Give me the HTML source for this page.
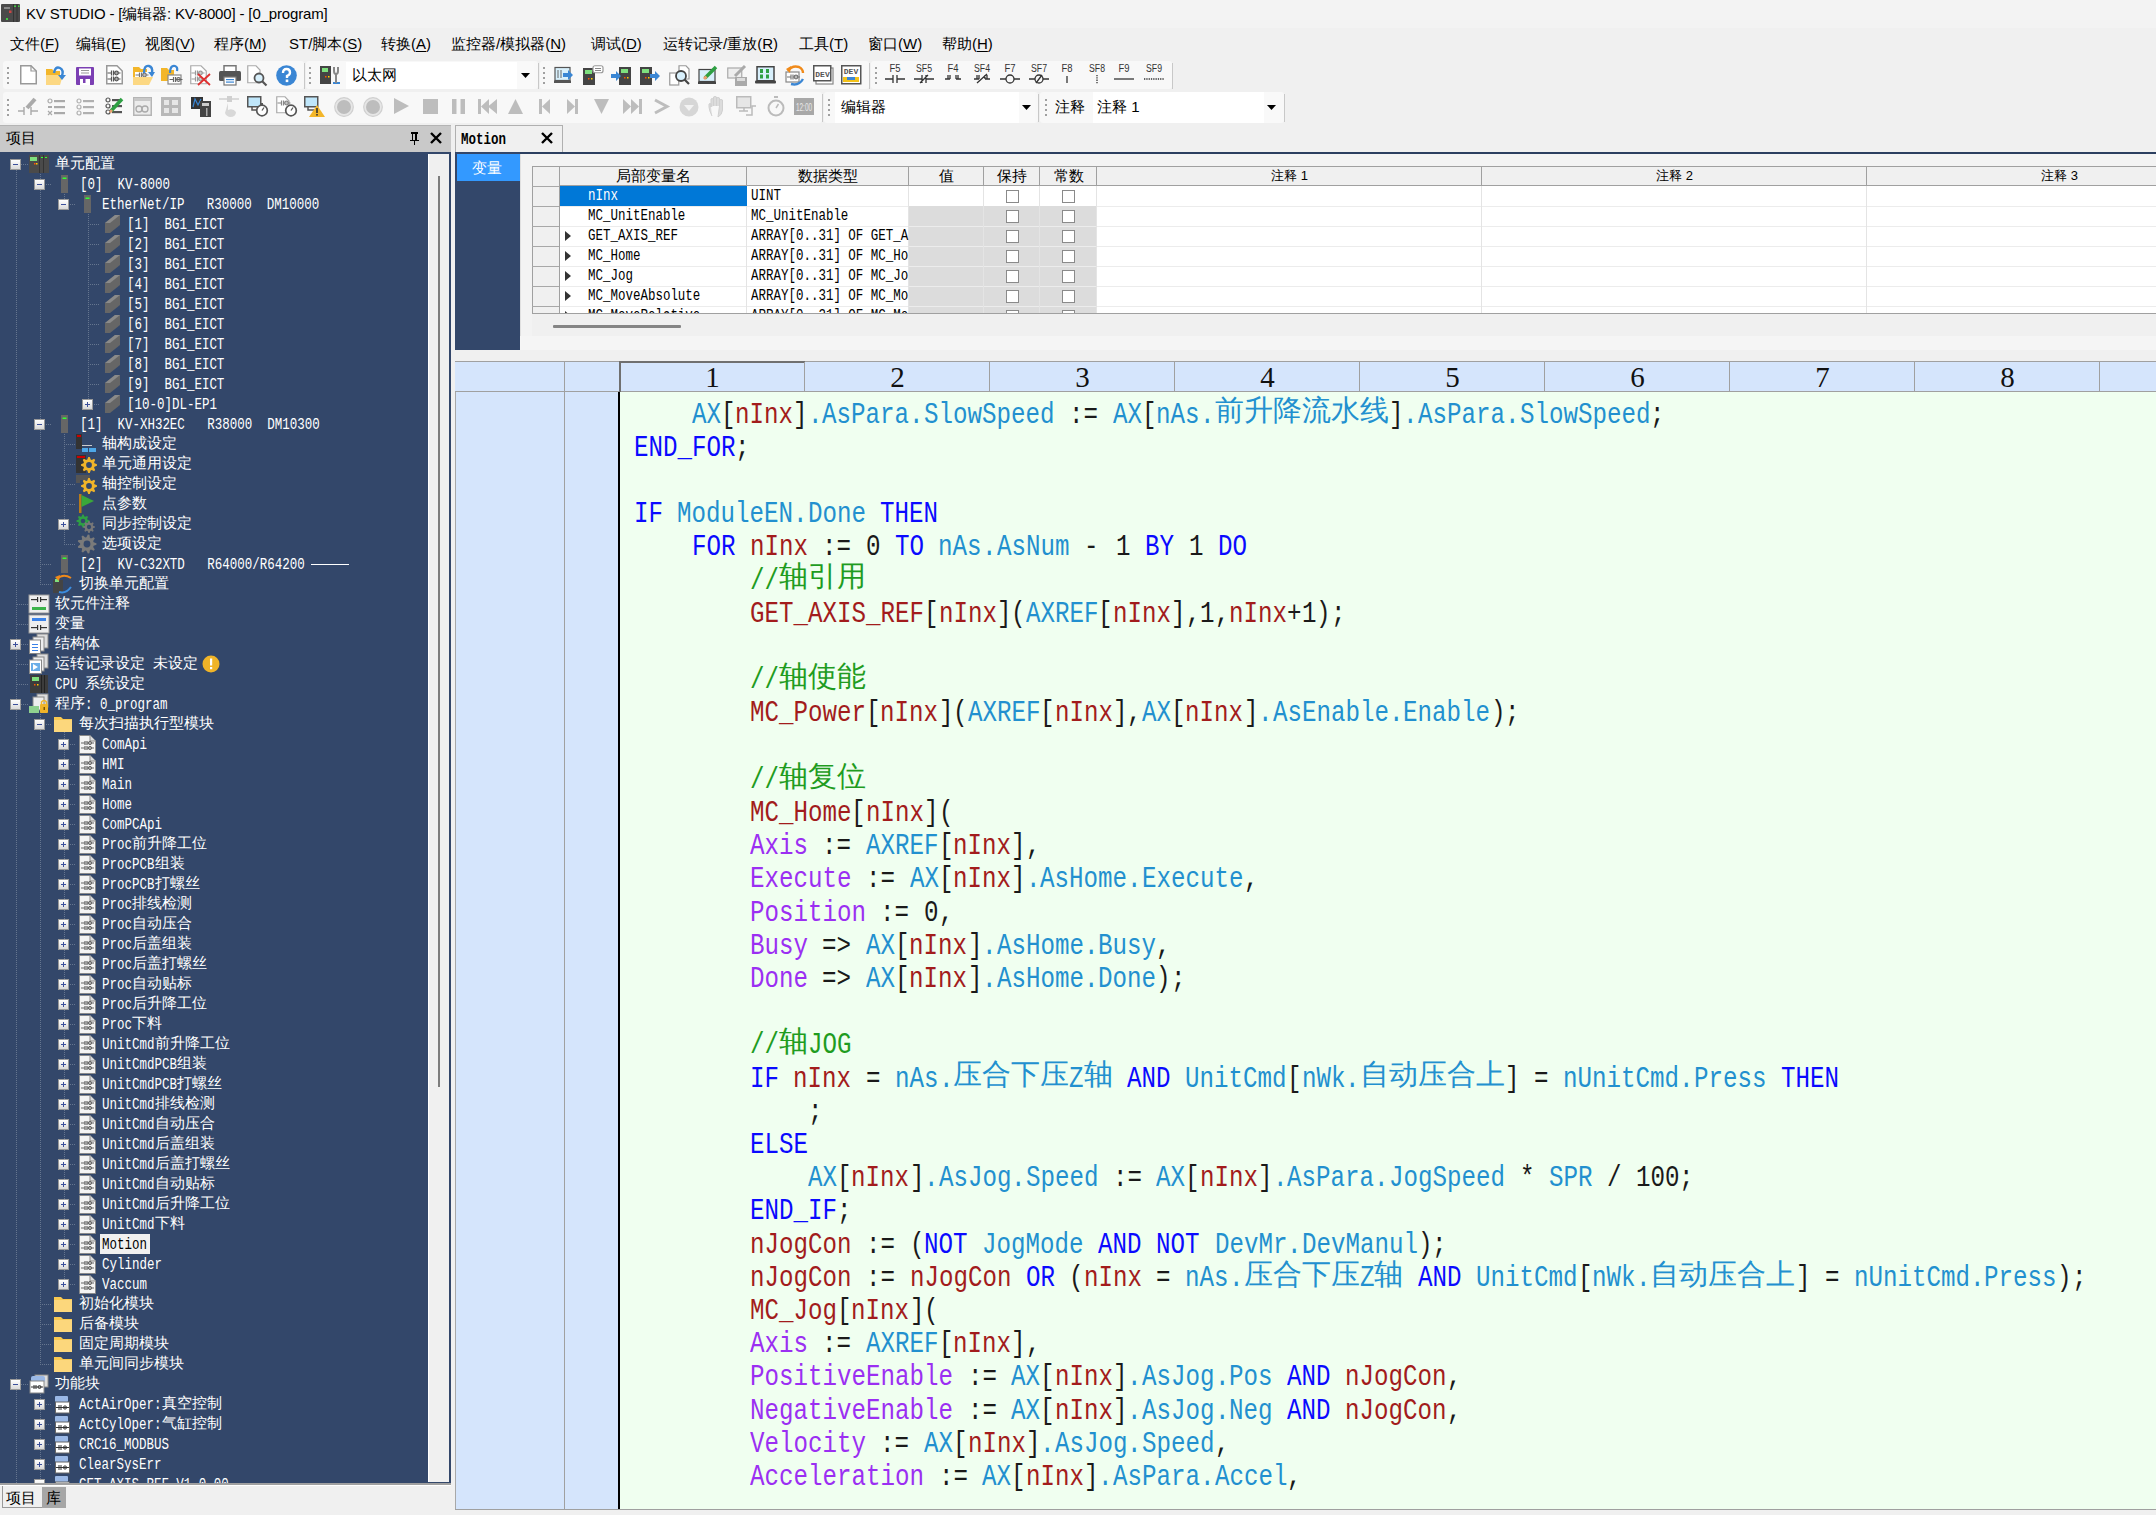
<!DOCTYPE html><html><head><meta charset="utf-8"><style>
*{margin:0;padding:0;box-sizing:border-box}
html,body{width:2156px;height:1515px;overflow:hidden;background:#f0f0f0;font-family:"Liberation Sans",sans-serif}
.ml{position:absolute;white-space:pre;font-family:"Liberation Mono",monospace}
.ml i{display:inline-block;font-style:normal;white-space:pre;vertical-align:baseline}
.ml i b{display:inline-block;font-weight:normal;transform-origin:0 50%}
.ml.bold{font-weight:bold}.ml.bold i b{font-weight:bold}
.ml i.cj{font-family:"Liberation Sans",sans-serif;line-height:0;position:relative;top:-0.07em}
.ui{position:absolute;white-space:pre;font-size:15px;color:#000;line-height:20px}
svg{position:absolute;overflow:visible}
</style></head><body><div style="position:absolute;left:0px;top:0px;width:2156px;height:28px;background:#f3f3f3"></div>
<svg style="left:1px;top:4px" width="19" height="18" viewBox="0 0 19 18"><rect width="19" height="18" rx="1" fill="#4a4a4a"/><rect x="12" y="0" width="1" height="18" fill="#333"/><rect x="15.5" y="0" width="1" height="18" fill="#333"/><rect x="13" y="1.5" width="2" height="1.5" fill="#4c4"/><rect x="17" y="1.5" width="1.5" height="1.5" fill="#4c4"/><rect x="3" y="3" width="6" height="2" fill="#888"/><rect x="8" y="6.5" width="2.5" height="2.5" fill="#c44"/><rect x="5" y="14" width="2" height="2" fill="#4c4"/></svg>
<div style="position:absolute;left:26px;top:4px;white-space:pre;font-size:15px;line-height:20px;color:#000;letter-spacing:-0.15px">KV STUDIO - [编辑器: KV-8000] - [0_program]</div>
<div class="ui" style="left:10px;top:34px">文件(<u style="text-decoration-thickness:1px;text-underline-offset:2px">F</u>)</div>
<div class="ui" style="left:76px;top:34px">编辑(<u style="text-decoration-thickness:1px;text-underline-offset:2px">E</u>)</div>
<div class="ui" style="left:145px;top:34px">视图(<u style="text-decoration-thickness:1px;text-underline-offset:2px">V</u>)</div>
<div class="ui" style="left:214px;top:34px">程序(<u style="text-decoration-thickness:1px;text-underline-offset:2px">M</u>)</div>
<div class="ui" style="left:289px;top:34px">ST/脚本(<u style="text-decoration-thickness:1px;text-underline-offset:2px">S</u>)</div>
<div class="ui" style="left:381px;top:34px">转换(<u style="text-decoration-thickness:1px;text-underline-offset:2px">A</u>)</div>
<div class="ui" style="left:451px;top:34px">监控器/模拟器(<u style="text-decoration-thickness:1px;text-underline-offset:2px">N</u>)</div>
<div class="ui" style="left:591px;top:34px">调试(<u style="text-decoration-thickness:1px;text-underline-offset:2px">D</u>)</div>
<div class="ui" style="left:663px;top:34px">运转记录/重放(<u style="text-decoration-thickness:1px;text-underline-offset:2px">R</u>)</div>
<div class="ui" style="left:799px;top:34px">工具(<u style="text-decoration-thickness:1px;text-underline-offset:2px">T</u>)</div>
<div class="ui" style="left:868px;top:34px">窗口(<u style="text-decoration-thickness:1px;text-underline-offset:2px">W</u>)</div>
<div class="ui" style="left:942px;top:34px">帮助(<u style="text-decoration-thickness:1px;text-underline-offset:2px">H</u>)</div>
<div style="position:absolute;left:3px;top:61px;width:301px;height:28px;background:#f8f8f8;border-radius:3px"></div>
<div style="position:absolute;left:7px;top:67px;width:2px;height:2px;background:#a0a0a0"></div>
<div style="position:absolute;left:7px;top:72px;width:2px;height:2px;background:#a0a0a0"></div>
<div style="position:absolute;left:7px;top:77px;width:2px;height:2px;background:#a0a0a0"></div>
<div style="position:absolute;left:7px;top:82px;width:2px;height:2px;background:#a0a0a0"></div>
<div style="position:absolute;left:306px;top:61px;width:232px;height:28px;background:#f8f8f8;border-radius:3px"></div>
<div style="position:absolute;left:309px;top:67px;width:2px;height:2px;background:#a0a0a0"></div>
<div style="position:absolute;left:309px;top:72px;width:2px;height:2px;background:#a0a0a0"></div>
<div style="position:absolute;left:309px;top:77px;width:2px;height:2px;background:#a0a0a0"></div>
<div style="position:absolute;left:309px;top:82px;width:2px;height:2px;background:#a0a0a0"></div>
<div style="position:absolute;left:540px;top:61px;width:329px;height:28px;background:#f8f8f8;border-radius:3px"></div>
<div style="position:absolute;left:543px;top:67px;width:2px;height:2px;background:#a0a0a0"></div>
<div style="position:absolute;left:543px;top:72px;width:2px;height:2px;background:#a0a0a0"></div>
<div style="position:absolute;left:543px;top:77px;width:2px;height:2px;background:#a0a0a0"></div>
<div style="position:absolute;left:543px;top:82px;width:2px;height:2px;background:#a0a0a0"></div>
<div style="position:absolute;left:871px;top:61px;width:301px;height:28px;background:#f8f8f8;border-radius:3px"></div>
<div style="position:absolute;left:875px;top:67px;width:2px;height:2px;background:#a0a0a0"></div>
<div style="position:absolute;left:875px;top:72px;width:2px;height:2px;background:#a0a0a0"></div>
<div style="position:absolute;left:875px;top:77px;width:2px;height:2px;background:#a0a0a0"></div>
<div style="position:absolute;left:875px;top:82px;width:2px;height:2px;background:#a0a0a0"></div>
<div style="position:absolute;left:304px;top:63px;width:1px;height:26px;background:#c8c8c8"></div>
<div style="position:absolute;left:538px;top:63px;width:1px;height:26px;background:#c8c8c8"></div>
<div style="position:absolute;left:869px;top:63px;width:1px;height:26px;background:#c8c8c8"></div>
<div style="position:absolute;left:1172px;top:63px;width:1px;height:26px;background:#c8c8c8"></div>
<div style="position:absolute;left:3px;top:92px;width:819px;height:31px;background:#f8f8f8;border-radius:3px"></div>
<div style="position:absolute;left:7px;top:99px;width:2px;height:2px;background:#a0a0a0"></div>
<div style="position:absolute;left:7px;top:104px;width:2px;height:2px;background:#a0a0a0"></div>
<div style="position:absolute;left:7px;top:109px;width:2px;height:2px;background:#a0a0a0"></div>
<div style="position:absolute;left:7px;top:114px;width:2px;height:2px;background:#a0a0a0"></div>
<div style="position:absolute;left:824px;top:92px;width:214px;height:31px;background:#f8f8f8;border-radius:3px"></div>
<div style="position:absolute;left:828px;top:99px;width:2px;height:2px;background:#a0a0a0"></div>
<div style="position:absolute;left:828px;top:104px;width:2px;height:2px;background:#a0a0a0"></div>
<div style="position:absolute;left:828px;top:109px;width:2px;height:2px;background:#a0a0a0"></div>
<div style="position:absolute;left:828px;top:114px;width:2px;height:2px;background:#a0a0a0"></div>
<div style="position:absolute;left:1040px;top:92px;width:244px;height:31px;background:#f8f8f8;border-radius:3px"></div>
<div style="position:absolute;left:1045px;top:99px;width:2px;height:2px;background:#a0a0a0"></div>
<div style="position:absolute;left:1045px;top:104px;width:2px;height:2px;background:#a0a0a0"></div>
<div style="position:absolute;left:1045px;top:109px;width:2px;height:2px;background:#a0a0a0"></div>
<div style="position:absolute;left:1045px;top:114px;width:2px;height:2px;background:#a0a0a0"></div>
<div style="position:absolute;left:822px;top:94px;width:1px;height:28px;background:#c8c8c8"></div>
<div style="position:absolute;left:1038px;top:94px;width:1px;height:28px;background:#c8c8c8"></div>
<div style="position:absolute;left:1284px;top:94px;width:1px;height:28px;background:#c8c8c8"></div>
<div style="position:absolute;left:346px;top:62px;width:188px;height:27px;background:#fff"></div>
<div style="position:absolute;left:517px;top:62px;width:17px;height:27px;background:#f9f9f9"></div>
<div style="position:absolute;left:352px;top:65px;white-space:pre;font-size:15px;line-height:20px">以太网</div>
<svg style="left:521px;top:73px" width="9" height="5"><path d="M0 0H9L4.5 5Z" fill="#000"/></svg>
<div style="position:absolute;left:835px;top:92px;width:200px;height:31px;background:#fff"></div>
<div style="position:absolute;left:1019px;top:92px;width:16px;height:31px;background:#f9f9f9"></div>
<div style="position:absolute;left:841px;top:97px;white-space:pre;font-size:15px;line-height:20px">编辑器</div>
<svg style="left:1022px;top:105px" width="9" height="5"><path d="M0 0H9L4.5 5Z" fill="#000"/></svg>
<div style="position:absolute;left:1055px;top:97px;white-space:pre;font-size:15px;line-height:20px">注释</div>
<div style="position:absolute;left:1093px;top:92px;width:187px;height:31px;background:#fff"></div>
<div style="position:absolute;left:1264px;top:92px;width:16px;height:31px;background:#f9f9f9"></div>
<div style="position:absolute;left:1097px;top:97px;white-space:pre;font-size:15px;line-height:20px">注释 1</div>
<svg style="left:1267px;top:105px" width="9" height="5"><path d="M0 0H9L4.5 5Z" fill="#000"/></svg>
<svg style="left:20px;top:65px" width="17" height="20" viewBox="0 0 17 20"><path d="M0.75 0.75H11L16.25 6V18.75H0.75Z" fill="#fff" stroke="#999" stroke-width="1.5"/><path d="M11 0.75V6H16.25" fill="none" stroke="#999" stroke-width="1.2"/></svg>
<svg style="left:46px;top:67px" width="21" height="19" viewBox="0 0 21 19"><path d="M0 2H6L8 4H14V18H0Z" fill="#f3b62a"/><path d="M0 8H17L14 18H0Z" fill="#fcd883"/><path d="M8 6Q9 -1 14 1Q18 3 16 9" stroke="#3a86d4" stroke-width="2.4" fill="none"/><path d="M12 8L16 13L20 8Z" fill="#3a86d4"/></svg>
<svg style="left:76px;top:67px" width="18" height="18" viewBox="0 0 18 18"><rect width="18" height="18" rx="1" fill="#7b3fb3"/><rect x="3" y="1.5" width="12" height="7" fill="#fff"/><rect x="5" y="3" width="8" height="1" fill="#999"/><rect x="5" y="5.5" width="8" height="1" fill="#999"/><rect x="4" y="12" width="10" height="6" fill="#fff"/><rect x="7" y="12" width="2.5" height="4" fill="#7b3fb3"/></svg>
<svg style="left:106px;top:65px" width="17" height="20" viewBox="0 0 17 20"><path d="M0.75 0.75H11L16.25 6V18.75H0.75Z" fill="#fff" stroke="#999" stroke-width="1.5"/><path d="M1.5 8H5.5 M7.5 8H14.5" stroke="#555" stroke-width="1.2"/><path d="M5.5 5.5V10.5 M7.5 5.5V10.5" stroke="#555" stroke-width="1.2"/><circle cx="10.5" cy="8" r="1.8" fill="none" stroke="#555" stroke-width="1.2"/><path d="M1.5 14H5.5 M7.5 14H14.5" stroke="#555" stroke-width="1.2"/><path d="M5.5 11.5V16.5 M7.5 11.5V16.5" stroke="#555" stroke-width="1.2"/><circle cx="10.5" cy="14" r="1.8" fill="none" stroke="#555" stroke-width="1.2"/></svg>
<svg style="left:133px;top:65px" width="21" height="21" viewBox="0 0 21 21"><path d="M0 2H6L8 4H14V19H0Z" fill="#f3b62a"/><rect x="2" y="7" width="12" height="6" fill="#fff"/><path d="M2.5 10H6.5 M8.5 10H15.5" stroke="#777" stroke-width="1.2"/><path d="M6.5 7.5V12.5 M8.5 7.5V12.5" stroke="#777" stroke-width="1.2"/><circle cx="11.5" cy="10" r="1.8" fill="none" stroke="#777" stroke-width="1.2"/><path d="M0 12H20L16 20H0Z" fill="#fcd883"/><path d="M11 8Q11 0 16 1Q20 2 19 8" stroke="#3a86d4" stroke-width="2.4" fill="none"/><path d="M15 7L19 12L22 7Z" fill="#3a86d4"/></svg>
<svg style="left:161px;top:65px" width="21" height="21" viewBox="0 0 21 21"><path d="M0 3H6L8 5H13V16H0Z" fill="#f3b62a"/><rect x="7" y="10" width="13" height="9" fill="#fff" stroke="#888" stroke-width="1.2"/><path d="M8.5 14.5H12.5 M14.5 14.5H21.5" stroke="#666" stroke-width="1.2"/><path d="M12.5 12.0V17.0 M14.5 12.0V17.0" stroke="#666" stroke-width="1.2"/><circle cx="17.5" cy="14.5" r="1.8" fill="none" stroke="#666" stroke-width="1.2"/><path d="M9 8Q9 0 14 1Q17 2 16 6" stroke="#3a86d4" stroke-width="2.2" fill="none"/></svg>
<svg style="left:190px;top:65px" width="21" height="21" viewBox="0 0 21 21"><path d="M0.75 0.75H11L16.25 6V18.75H0.75Z" fill="#fff" stroke="#aaa" stroke-width="1.2"/><path d="M1.5 8H5.5 M7.5 8H14.5" stroke="#999" stroke-width="1.2"/><path d="M5.5 5.5V10.5 M7.5 5.5V10.5" stroke="#999" stroke-width="1.2"/><circle cx="10.5" cy="8" r="1.8" fill="none" stroke="#999" stroke-width="1.2"/><path d="M1.5 14H5.5 M7.5 14H14.5" stroke="#999" stroke-width="1.2"/><path d="M5.5 11.5V16.5 M7.5 11.5V16.5" stroke="#999" stroke-width="1.2"/><circle cx="10.5" cy="14" r="1.8" fill="none" stroke="#999" stroke-width="1.2"/><path d="M8 9L20 20M20 9L8 20" stroke="#e03030" stroke-width="1.8"/></svg>
<svg style="left:219px;top:65px" width="22" height="21" viewBox="0 0 22 21"><rect x="5" y="0.75" width="12" height="6" fill="#fff" stroke="#777" stroke-width="1.5"/><rect x="0" y="6" width="22" height="10" rx="1.5" fill="#555"/><rect x="5" y="12" width="12" height="8" fill="#fff" stroke="#777" stroke-width="1.2"/><rect x="7" y="14" width="8" height="1.2" fill="#3a86d4"/><rect x="7" y="16.5" width="8" height="1.2" fill="#3a86d4"/></svg>
<svg style="left:247px;top:65px" width="21" height="21" viewBox="0 0 21 21"><path d="M0.75 0.75H9L13 5V17.75H0.75Z" fill="#fff" stroke="#aaa" stroke-width="1.2"/><circle cx="12" cy="13" r="4.5" fill="#d8f0fc" stroke="#555" stroke-width="1.8"/><path d="M15 16L19.5 20.5" stroke="#555" stroke-width="2.2"/></svg>
<svg style="left:276px;top:65px" width="21" height="21" viewBox="0 0 21 21"><circle cx="10.5" cy="10.5" r="10.3" fill="#3a86d4"/><path d="M7 8Q7 4 10.5 4Q14 4 14 7.5Q14 10 11 11V13" stroke="#fff" stroke-width="2.4" fill="none"/><rect x="9.7" y="14.5" width="2.6" height="2.6" fill="#fff"/></svg>
<svg style="left:320px;top:65px" width="21" height="20" viewBox="0 0 21 20"><rect x="0" y="1" width="11" height="18" fill="#444"/><rect x="2" y="3" width="6" height="4" fill="#7ee07e"/><rect x="5" y="11" width="1.5" height="1.5" fill="#f50"/><rect x="8" y="11" width="1.5" height="1.5" fill="#fc0"/><path d="M13 18H20" stroke="#3a86d4" stroke-width="2"/><path d="M14 2V6Q14 9 16 9Q18 9 18 6V2" stroke="#888" stroke-width="2" fill="none"/><rect x="15" y="8" width="2" height="10" fill="#888"/></svg>
<svg style="left:554px;top:67px" width="21" height="18" viewBox="0 0 21 18"><rect x="1" y="0.5" width="15" height="13" fill="#d8f0fc" stroke="#555" stroke-width="1.2"/><rect x="0" y="13.5" width="17" height="2.5" fill="#555"/><path d="M4 3V11M7 3V11" stroke="#666" stroke-width="1"/><path d="M9 6H14V3L19 8L14 13V10H9Z" fill="#3a86d4"/></svg>
<svg style="left:583px;top:65px" width="21" height="20" viewBox="0 0 21 20"><rect x="0" y="3" width="12" height="17" fill="#444"/><rect x="2" y="5" width="7" height="4" fill="#7ee07e"/><rect x="5" y="13" width="1.5" height="1.5" fill="#f50"/><rect x="8" y="13" width="1.5" height="1.5" fill="#fc0"/><rect x="10" y="0.75" width="10" height="7" rx="2" fill="#fff" stroke="#999" stroke-width="1.2"/><path d="M12 3.5H18M12 5.5H18" stroke="#888"/></svg>
<svg style="left:611px;top:67px" width="21" height="18" viewBox="0 0 21 18"><rect x="8" y="0" width="12" height="18" fill="#444"/><rect x="10" y="2" width="7" height="4" fill="#7ee07e"/><rect x="13" y="10" width="1.5" height="1.5" fill="#f50"/><rect x="16" y="10" width="1.5" height="1.5" fill="#fc0"/><path d="M0 7H5V4L10 9L5 14V11H0Z" fill="#3a86d4"/></svg>
<svg style="left:640px;top:67px" width="21" height="18" viewBox="0 0 21 18"><rect x="0" y="0" width="12" height="18" fill="#444"/><rect x="2" y="2" width="7" height="4" fill="#7ee07e"/><rect x="5" y="10" width="1.5" height="1.5" fill="#f50"/><rect x="8" y="10" width="1.5" height="1.5" fill="#fc0"/><path d="M10 7H15V4L20 9L15 14V11H10Z" fill="#3a86d4"/></svg>
<svg style="left:669px;top:65px" width="21" height="21" viewBox="0 0 21 21"><rect x="0.75" y="8" width="9" height="12" fill="#fff" stroke="#999" stroke-width="1.2"/><path d="M10 0.75H17L20 4V14H10Z" fill="#fff" stroke="#999" stroke-width="1.2"/><circle cx="12" cy="11" r="5" fill="#d8f0fc" stroke="#444" stroke-width="1.8"/><path d="M15.5 14.5L20 19" stroke="#444" stroke-width="2.2"/></svg>
<svg style="left:698px;top:65px" width="21" height="21" viewBox="0 0 21 21"><rect x="1" y="4.5" width="16" height="12" fill="#d8f0fc" stroke="#444" stroke-width="1.2"/><rect x="0" y="16.5" width="18" height="2.5" fill="#444"/><path d="M7 13L18 2" stroke="#2ea043" stroke-width="3.5"/><path d="M6 14L8.5 11.5" stroke="#e9a070" stroke-width="3"/></svg>
<svg style="left:727px;top:65px" width="21" height="21" viewBox="0 0 21 21"><rect x="0.75" y="3" width="14" height="10" fill="#eee" stroke="#aaa" stroke-width="1.2"/><path d="M8 11L18 1" stroke="#aaa" stroke-width="3"/><rect x="8" y="12" width="12" height="9" fill="#aaa"/><rect x="10" y="13" width="8" height="3" fill="#ddd"/></svg>
<svg style="left:755px;top:66px" width="21" height="19" viewBox="0 0 21 19"><rect x="2" y="0.75" width="17" height="14" fill="#d8f0fc" stroke="#444" stroke-width="1.5"/><rect x="0" y="14.5" width="21" height="3" rx="1" fill="#444"/><rect x="5" y="3" width="3" height="4" fill="#2ea043"/><rect x="5" y="8.5" width="3" height="4" fill="#2ea043"/><rect x="11" y="3" width="3" height="4" fill="#2ea043"/><rect x="11" y="8.5" width="3" height="4" fill="#2ea043"/></svg>
<svg style="left:785px;top:65px" width="21" height="21" viewBox="0 0 21 21"><rect x="1" y="7" width="13" height="10" fill="#fff" stroke="#888" stroke-width="1.2"/><path d="M2 12H6 M8 12H15" stroke="#777" stroke-width="1.2"/><path d="M6 9.5V14.5 M8 9.5V14.5" stroke="#777" stroke-width="1.2"/><circle cx="11" cy="12" r="1.8" fill="none" stroke="#777" stroke-width="1.2"/><path d="M3 6Q7 0 14 2Q18 4 18 8" stroke="#f08a1a" stroke-width="2.4" fill="none"/><path d="M1 4L6 1L5 8Z" fill="#f08a1a"/><path d="M6 19Q14 21 18 14" stroke="#3a86d4" stroke-width="2.4" fill="none"/></svg>
<svg style="left:813px;top:65px" width="21" height="20" viewBox="0 0 21 20"><rect x="3" y="3" width="17" height="16" fill="#fff" stroke="#888" stroke-width="1.2"/><rect x="0.75" y="0.75" width="17" height="15" fill="#fff" stroke="#555" stroke-width="1.5"/><text x="9.5" y="12" font-family="Liberation Mono" font-size="8" font-weight="bold" text-anchor="middle" fill="#555">DEV</text></svg>
<svg style="left:841px;top:65px" width="21" height="20" viewBox="0 0 21 20"><rect x="0.75" y="0.75" width="19" height="18" fill="#fff" stroke="#555" stroke-width="1.5"/><text x="10" y="9" font-family="Liberation Mono" font-size="8" font-weight="bold" text-anchor="middle" fill="#555">DEV</text><rect x="2" y="12" width="16" height="5" fill="#f3c21a"/><rect x="6" y="12" width="8" height="3" fill="#3a86d4"/></svg>
<svg style="left:885px;top:63px" width="20" height="22" viewBox="0 0 20 22"><text x="10" y="9" font-family="Liberation Sans" font-size="10" text-anchor="middle" fill="#333" textLength="11" lengthAdjust="spacingAndGlyphs">F5</text><path d="M0 16H8M12 16H20M8 12V20M12 12V20" stroke="#333" stroke-width="1.3"/></svg>
<svg style="left:914px;top:63px" width="20" height="22" viewBox="0 0 20 22"><text x="10" y="9" font-family="Liberation Sans" font-size="10" text-anchor="middle" fill="#333" textLength="16" lengthAdjust="spacingAndGlyphs">SF5</text><path d="M0 16H8M12 16H20M8 12V20M12 12V20M6 20L14 12" stroke="#333" stroke-width="1.3"/></svg>
<svg style="left:943px;top:63px" width="20" height="22" viewBox="0 0 20 22"><text x="10" y="9" font-family="Liberation Sans" font-size="10" text-anchor="middle" fill="#333" textLength="11" lengthAdjust="spacingAndGlyphs">F4</text><path d="M2 16H7M13 16H18M7 12V16M13 12V16M5 12V16M15 12V16" stroke="#333" stroke-width="1.3"/></svg>
<svg style="left:972px;top:63px" width="20" height="22" viewBox="0 0 20 22"><text x="10" y="9" font-family="Liberation Sans" font-size="10" text-anchor="middle" fill="#333" textLength="16" lengthAdjust="spacingAndGlyphs">SF4</text><path d="M2 16H7M13 16H18M7 12V16M13 12V16M5 12V16M15 12V16M5 20L15 11" stroke="#333" stroke-width="1.3"/></svg>
<svg style="left:1000px;top:63px" width="20" height="22" viewBox="0 0 20 22"><text x="10" y="9" font-family="Liberation Sans" font-size="10" text-anchor="middle" fill="#333" textLength="11" lengthAdjust="spacingAndGlyphs">F7</text><path d="M0 16H6M14 16H20" stroke="#333" stroke-width="1.3"/><circle cx="10" cy="16" r="4" fill="none" stroke="#333" stroke-width="1.3"/></svg>
<svg style="left:1029px;top:63px" width="20" height="22" viewBox="0 0 20 22"><text x="10" y="9" font-family="Liberation Sans" font-size="10" text-anchor="middle" fill="#333" textLength="16" lengthAdjust="spacingAndGlyphs">SF7</text><path d="M0 16H6M14 16H20M7 20L13 12" stroke="#333" stroke-width="1.3"/><circle cx="10" cy="16" r="4" fill="none" stroke="#333" stroke-width="1.3"/></svg>
<svg style="left:1057px;top:63px" width="20" height="22" viewBox="0 0 20 22"><text x="10" y="9" font-family="Liberation Sans" font-size="10" text-anchor="middle" fill="#333" textLength="11" lengthAdjust="spacingAndGlyphs">F8</text><path d="M10 13V20" stroke="#333" stroke-width="1.3"/></svg>
<svg style="left:1087px;top:63px" width="20" height="22" viewBox="0 0 20 22"><text x="10" y="9" font-family="Liberation Sans" font-size="10" text-anchor="middle" fill="#333" textLength="16" lengthAdjust="spacingAndGlyphs">SF8</text><path d="M10 12V21" stroke="#333" stroke-width="1.3" stroke-dasharray="1.3 1"/></svg>
<svg style="left:1114px;top:63px" width="20" height="22" viewBox="0 0 20 22"><text x="10" y="9" font-family="Liberation Sans" font-size="10" text-anchor="middle" fill="#333" textLength="11" lengthAdjust="spacingAndGlyphs">F9</text><path d="M0 16H20" stroke="#333" stroke-width="1.3"/></svg>
<svg style="left:1144px;top:63px" width="20" height="22" viewBox="0 0 20 22"><text x="10" y="9" font-family="Liberation Sans" font-size="10" text-anchor="middle" fill="#333" textLength="16" lengthAdjust="spacingAndGlyphs">SF9</text><path d="M0 16H20" stroke="#333" stroke-width="1.3" stroke-dasharray="1.3 1"/></svg>
<svg style="left:18px;top:96px" width="20" height="20" viewBox="0 0 20 20"><path d="M0 15H6M13 15H20M6 11V19M13 11V19" stroke="#aaaaaa" stroke-width="1.4"/><path d="M9 12L17 3" stroke="#aaaaaa" stroke-width="4"/></svg>
<svg style="left:47px;top:98px" width="19" height="19" viewBox="0 0 19 19"><circle cx="3" cy="3" r="2" fill="none" stroke="#aaaaaa" stroke-width="1.2"/><rect x="7" y="2" width="11" height="2.2" fill="#aaaaaa"/><rect x="1" y="8" width="4" height="2" fill="#aaaaaa"/><rect x="7" y="8" width="11" height="2.2" fill="#aaaaaa"/><path d="M1 13L5 17M5 13L1 17" stroke="#aaaaaa" stroke-width="1.2"/><rect x="7" y="14" width="11" height="2.2" fill="#aaaaaa"/></svg>
<svg style="left:76px;top:98px" width="19" height="19" viewBox="0 0 19 19"><circle cx="3" cy="3" r="2" fill="none" stroke="#b0b0b0" stroke-width="1.2"/><rect x="7" y="2" width="11" height="2.2" fill="#b0b0b0"/><circle cx="3" cy="9" r="2" fill="none" stroke="#b0b0b0" stroke-width="1.2"/><rect x="7" y="8" width="11" height="2.2" fill="#b0b0b0"/><circle cx="3" cy="15" r="2" fill="none" stroke="#b0b0b0" stroke-width="1.2"/><rect x="7" y="14" width="11" height="2.2" fill="#b0b0b0"/></svg>
<svg style="left:105px;top:96px" width="20" height="21" viewBox="0 0 20 21"><circle cx="3" cy="4" r="2" fill="none" stroke="#555" stroke-width="1.2"/><rect x="7" y="3" width="10" height="2.2" fill="#555"/><circle cx="3" cy="10" r="2" fill="none" stroke="#555" stroke-width="1.2"/><rect x="7" y="9" width="10" height="2.2" fill="#555"/><circle cx="3" cy="16" r="2" fill="none" stroke="#555" stroke-width="1.2"/><rect x="7" y="15" width="10" height="2.2" fill="#555"/><path d="M6 15L17 3" stroke="#2ea043" stroke-width="3.5"/><path d="M5 16.5L7 14" stroke="#e9a070" stroke-width="2.5"/></svg>
<svg style="left:133px;top:97px" width="19" height="19" viewBox="0 0 19 19"><rect x="0.75" y="0.75" width="17.5" height="17.5" fill="#ececec" stroke="#b5b5b5" stroke-width="1.5"/><rect x="1" y="1" width="17" height="3" fill="#c8c8c8"/><circle cx="6" cy="12" r="3" fill="none" stroke="#aaa" stroke-width="1.3"/><circle cx="12" cy="12" r="3" fill="none" stroke="#aaa" stroke-width="1.3"/></svg>
<svg style="left:161px;top:97px" width="20" height="19" viewBox="0 0 20 19"><rect width="20" height="19" fill="#b8b8b8"/><path d="M3 3H8V8H3ZM11 3H17V8H11ZM3 11H8V16H3ZM11 11H17V16H11Z" fill="#e6e6e6"/></svg>
<svg style="left:191px;top:96px" width="20" height="21" viewBox="0 0 20 21"><rect x="0" y="1" width="12" height="12" fill="#333"/><path d="M2 11L4 3L7 9L10 3" stroke="#3a86d4" stroke-width="1.2" fill="none"/><rect x="9" y="5" width="11" height="16" fill="#444"/><rect x="11" y="7" width="7" height="3" fill="#ccc"/><rect x="15" y="12" width="1.5" height="8" fill="#aaa"/></svg>
<svg style="left:219px;top:96px" width="20" height="21" viewBox="0 0 20 21"><path d="M0 3H20" stroke="#d0d0d0" stroke-width="1.5"/><rect x="8" y="0" width="5" height="6" fill="#d0d0d0"/><path d="M9 7V14Q14 12 17 16Q17 21 11 21Q7 20 6 17" fill="#d8d8d8"/></svg>
<svg style="left:247px;top:96px" width="21" height="21" viewBox="0 0 21 21"><rect x="0.75" y="0.75" width="13" height="10" fill="#bfe6fa" stroke="#555" stroke-width="1.5"/><path d="M5 11V14H10" stroke="#555" stroke-width="1.5" fill="none"/><circle cx="15" cy="14.5" r="5.3" fill="#fff" stroke="#555" stroke-width="1.7"/><path d="M15 14.5L17 11.5" stroke="#555" stroke-width="1.3"/><rect x="14" y="7" width="2" height="2" fill="#555"/></svg>
<svg style="left:276px;top:96px" width="21" height="21" viewBox="0 0 21 21"><path d="M0.75 0.75H9L13 5V16.75H0.75Z" fill="#fff" stroke="#aaa" stroke-width="1.2"/><path d="M1.5 7H5.5 M7.5 7H14.5" stroke="#888" stroke-width="1.2"/><path d="M5.5 4.5V9.5 M7.5 4.5V9.5" stroke="#888" stroke-width="1.2"/><circle cx="10.5" cy="7" r="1.8" fill="none" stroke="#888" stroke-width="1.2"/><circle cx="15" cy="14.5" r="5.3" fill="#fff" stroke="#555" stroke-width="1.7"/><path d="M15 14.5L17 11.5" stroke="#555" stroke-width="1.3"/></svg>
<svg style="left:304px;top:96px" width="21" height="22" viewBox="0 0 21 22"><rect x="0.75" y="0.75" width="13" height="10" fill="#bfe6fa" stroke="#555" stroke-width="1.5"/><path d="M4 11V14H10" stroke="#555" stroke-width="1.5" fill="none"/><path d="M13 9L21 21H5Z" fill="#f3b62a"/><rect x="12.2" y="12" width="1.6" height="5" fill="#333"/><rect x="12.2" y="18" width="1.6" height="1.6" fill="#333"/></svg>
<svg style="left:334px;top:97px" width="20" height="20" viewBox="0 0 20 20"><circle cx="10" cy="10" r="9.3" fill="#e6e6e6" stroke="#d0d0d0" stroke-width="1.2"/><circle cx="10" cy="10" r="7" fill="#bdbdbd"/></svg>
<svg style="left:363px;top:97px" width="20" height="20" viewBox="0 0 20 20"><circle cx="10" cy="10" r="9.3" fill="#e6e6e6" stroke="#d0d0d0" stroke-width="1.2"/><circle cx="10" cy="10" r="7" fill="#bdbdbd"/></svg>
<svg style="left:394px;top:98px" width="15" height="16" viewBox="0 0 15 16"><path d="M0 0L15 8L0 16Z" fill="#bdbdbd"/></svg>
<svg style="left:423px;top:99px" width="15" height="15" viewBox="0 0 15 15"><rect width="15" height="15" fill="#bdbdbd"/></svg>
<svg style="left:452px;top:99px" width="13" height="15" viewBox="0 0 13 15"><rect width="4.5" height="15" fill="#bdbdbd"/><rect x="8.5" width="4.5" height="15" fill="#bdbdbd"/></svg>
<svg style="left:478px;top:99px" width="19" height="15" viewBox="0 0 19 15"><rect width="3" height="15" fill="#bdbdbd"/><path d="M3 7.5L11 0V15Z M10 7.5L19 0V15Z" fill="#bdbdbd"/></svg>
<svg style="left:508px;top:99px" width="15" height="15" viewBox="0 0 15 15"><path d="M7.5 0L15 15H0Z" fill="#bdbdbd"/></svg>
<svg style="left:539px;top:99px" width="11" height="15" viewBox="0 0 11 15"><rect width="3" height="15" fill="#bdbdbd"/><path d="M3 7.5L11 0V15Z" fill="#bdbdbd"/></svg>
<svg style="left:567px;top:99px" width="11" height="15" viewBox="0 0 11 15"><rect x="8" width="3" height="15" fill="#bdbdbd"/><path d="M0 0L8 7.5L0 15Z" fill="#bdbdbd"/></svg>
<svg style="left:594px;top:99px" width="15" height="15" viewBox="0 0 15 15"><path d="M0 0H15L7.5 15Z" fill="#bdbdbd"/></svg>
<svg style="left:623px;top:99px" width="19" height="15" viewBox="0 0 19 15"><rect x="16" width="3" height="15" fill="#bdbdbd"/><path d="M0 0L8 7.5L0 15Z M8 0L16 7.5L8 15Z" fill="#bdbdbd"/></svg>
<svg style="left:654px;top:99px" width="14" height="15" viewBox="0 0 14 15"><path d="M1 1L13 7.5L1 14" stroke="#bdbdbd" stroke-width="3" fill="none"/></svg>
<svg style="left:679px;top:97px" width="20" height="20" viewBox="0 0 20 20"><circle cx="10" cy="10" r="9.5" fill="#d6d6d6"/><path d="M5 8H15L10 14Z" fill="#f3f3f3"/></svg>
<svg style="left:708px;top:96px" width="19" height="21" viewBox="0 0 19 21"><path d="M4 20Q1 14 1 11V8Q2 7 3 8V11M3 11V3Q4 2 5.5 3V10M5.5 10V1Q7 0 8.5 1V10M8.5 10V2Q10 1 11.5 2V10M11.5 10V4Q13 3 14.5 4V14Q14 19 10 21Z" fill="#dcdcdc" stroke="#d0d0d0"/></svg>
<svg style="left:736px;top:96px" width="21" height="21" viewBox="0 0 21 21"><rect x="0.75" y="0.75" width="14" height="11" fill="#e6e6e6" stroke="#bbb" stroke-width="1.5"/><path d="M3 15H12M8 12V15M10 19H16V10H20" stroke="#bbb" stroke-width="1.5" fill="none"/></svg>
<svg style="left:767px;top:96px" width="18" height="21" viewBox="0 0 18 21"><circle cx="9" cy="12" r="7.5" fill="none" stroke="#bbb" stroke-width="2"/><rect x="7" y="0" width="4" height="2" fill="#bbb"/><path d="M9 12L11.5 8" stroke="#bbb" stroke-width="1.5"/></svg>
<svg style="left:794px;top:98px" width="20" height="17" viewBox="0 0 20 17"><rect width="20" height="17" fill="#a8a8a8"/><text x="10" y="12.5" font-family="Liberation Sans" font-size="10" text-anchor="middle" fill="#e8e8e8" textLength="16" lengthAdjust="spacingAndGlyphs">12:00</text></svg>
<div style="position:absolute;left:0px;top:125px;width:451px;height:27px;background:#c9c9c9;border-top:1px solid #b4b4b4"></div>
<div style="position:absolute;left:6px;top:128px;white-space:pre;font-size:15px;line-height:20px">项目</div>
<svg style="left:409px;top:132px" width="11" height="13"><path d="M2 0H9V2H8V8H10V9H1V8H3V2H2Z M5 9H6V13H5Z" fill="#000"/><rect x="4" y="2" width="2" height="6" fill="#c9c9c9"/></svg>
<svg style="left:430px;top:132px" width="12" height="12"><path d="M1 1L11 11M11 1L1 11" stroke="#000" stroke-width="2.4"/></svg>
<div style="position:absolute;left:0px;top:152px;width:449px;height:1331px;background:#33476a"></div>
<div style="position:absolute;left:449px;top:152px;width:2px;height:1331px;background:#33476a"></div>
<div style="position:absolute;left:428px;top:154px;width:21px;height:1328px;background:#f0f0f0;border-left:1px solid #fff"></div>
<div style="position:absolute;left:438px;top:176px;width:2px;height:911px;background:#7d7d7d"></div>
<div style="position:absolute;left:0px;top:1483px;width:451px;height:2px;background:#a0a0a0"></div>
<div style="position:absolute;left:0px;top:1485px;width:451px;height:1px;background:#fff"></div>
<div style="position:absolute;left:2px;top:1486px;width:40px;height:22px;background:#f0f0f0;border-left:1px solid #999;border-bottom:1px solid #999"></div>
<div style="position:absolute;left:42px;top:1487px;width:24px;height:21px;background:#a6a6a6"></div>
<div style="position:absolute;left:6px;top:1488px;white-space:pre;font-size:15px;line-height:20px">项目</div>
<div style="position:absolute;left:46px;top:1488px;white-space:pre;font-size:15px;line-height:20px">库</div>
<div style="position:absolute;left:455px;top:125px;width:108px;height:27px;background:#f0f0f0;border:1px solid #b0b0b0;border-bottom:none"></div>
<div class="ml bold" style="left:461.0px;top:130.0px;line-height:20px;font-size:16px"><i style="width:45.00px;color:#000"><b style="transform:scaleX(0.7800)">Motion</b></i></div>
<svg style="left:541px;top:132px" width="12" height="12"><path d="M1 1L11 11M11 1L1 11" stroke="#000" stroke-width="2.4"/></svg>
<div style="position:absolute;left:455px;top:152px;width:1701px;height:2px;background:#2c3f60"></div>
<div style="position:absolute;left:455px;top:152px;width:65px;height:198px;background:#33476a"></div>
<div style="position:absolute;left:457px;top:154px;width:63px;height:27px;background:#3399ff"></div>
<div style="position:absolute;left:472px;top:158px;white-space:pre;font-size:15px;line-height:20px;color:#fff">变量</div>
<div style="position:absolute;left:520px;top:154px;width:1636px;height:196px;background:#f3f3f3;border-left:1px solid #e0e0e0"></div>
<div style="position:absolute;left:455px;top:350px;width:1701px;height:11px;background:#f0f0f0"></div>
<div style="position:absolute;left:532px;top:166px;width:1624px;height:148px;background:#fff;border-top:1px solid #a0a0a0;border-left:1px solid #a0a0a0"></div>
<div style="position:absolute;left:532px;top:166px;width:1624px;height:20px;background:#f0f0f0;border-top:1px solid #a0a0a0;border-bottom:1px solid #a0a0a0"></div>
<div style="position:absolute;left:532px;top:166px;width:28px;height:148px;background:#f0f0f0;border-left:1px solid #a0a0a0;border-top:1px solid #a0a0a0"></div>
<div style="position:absolute;left:532px;top:186px;width:28px;height:1px;background:#a8a8a8"></div>
<div style="position:absolute;left:532px;top:206px;width:28px;height:1px;background:#a8a8a8"></div>
<div style="position:absolute;left:560px;top:206px;width:1596px;height:1px;background:#ececec"></div>
<div style="position:absolute;left:532px;top:226px;width:28px;height:1px;background:#a8a8a8"></div>
<div style="position:absolute;left:560px;top:226px;width:1596px;height:1px;background:#ececec"></div>
<div style="position:absolute;left:532px;top:246px;width:28px;height:1px;background:#a8a8a8"></div>
<div style="position:absolute;left:560px;top:246px;width:1596px;height:1px;background:#ececec"></div>
<div style="position:absolute;left:532px;top:266px;width:28px;height:1px;background:#a8a8a8"></div>
<div style="position:absolute;left:560px;top:266px;width:1596px;height:1px;background:#ececec"></div>
<div style="position:absolute;left:532px;top:286px;width:28px;height:1px;background:#a8a8a8"></div>
<div style="position:absolute;left:560px;top:286px;width:1596px;height:1px;background:#ececec"></div>
<div style="position:absolute;left:532px;top:306px;width:28px;height:1px;background:#a8a8a8"></div>
<div style="position:absolute;left:560px;top:306px;width:1596px;height:1px;background:#ececec"></div>
<div style="position:absolute;left:909px;top:206px;width:188px;height:108px;background:#dcdcdc"></div>
<div style="position:absolute;left:909px;top:226px;width:188px;height:1px;background:#ececec"></div>
<div style="position:absolute;left:909px;top:246px;width:188px;height:1px;background:#ececec"></div>
<div style="position:absolute;left:909px;top:266px;width:188px;height:1px;background:#ececec"></div>
<div style="position:absolute;left:909px;top:286px;width:188px;height:1px;background:#ececec"></div>
<div style="position:absolute;left:909px;top:306px;width:188px;height:1px;background:#ececec"></div>
<div style="position:absolute;left:909px;top:326px;width:188px;height:1px;background:#ececec"></div>
<div style="position:absolute;left:559px;top:166px;width:1px;height:20px;background:#a0a0a0"></div>
<div style="position:absolute;left:746px;top:166px;width:1px;height:20px;background:#a0a0a0"></div>
<div style="position:absolute;left:746px;top:186px;width:1px;height:128px;background:#e4e4e4"></div>
<div style="position:absolute;left:908px;top:166px;width:1px;height:20px;background:#a0a0a0"></div>
<div style="position:absolute;left:908px;top:186px;width:1px;height:128px;background:#e4e4e4"></div>
<div style="position:absolute;left:983px;top:166px;width:1px;height:20px;background:#a0a0a0"></div>
<div style="position:absolute;left:983px;top:186px;width:1px;height:128px;background:#e4e4e4"></div>
<div style="position:absolute;left:1039px;top:166px;width:1px;height:20px;background:#a0a0a0"></div>
<div style="position:absolute;left:1039px;top:186px;width:1px;height:128px;background:#e4e4e4"></div>
<div style="position:absolute;left:1096px;top:166px;width:1px;height:20px;background:#a0a0a0"></div>
<div style="position:absolute;left:1096px;top:186px;width:1px;height:128px;background:#e4e4e4"></div>
<div style="position:absolute;left:1481px;top:166px;width:1px;height:20px;background:#a0a0a0"></div>
<div style="position:absolute;left:1481px;top:186px;width:1px;height:128px;background:#e4e4e4"></div>
<div style="position:absolute;left:1866px;top:166px;width:1px;height:20px;background:#a0a0a0"></div>
<div style="position:absolute;left:1866px;top:186px;width:1px;height:128px;background:#e4e4e4"></div>
<div style="position:absolute;left:559px;top:166px;width:1px;height:148px;background:#a0a0a0"></div>
<div style="position:absolute;left:560px;top:186px;width:187px;height:20px;background:#0078d7"></div>
<div style="position:absolute;left:532px;top:313px;width:1624px;height:1px;background:#a0a0a0"></div>
<div class="ui" style="left:560px;top:166px;width:187px;text-align:center;font-size:15px;color:#000">局部变量名</div>
<div class="ui" style="left:747px;top:166px;width:162px;text-align:center;font-size:15px;color:#000">数据类型</div>
<div class="ui" style="left:909px;top:166px;width:75px;text-align:center;font-size:15px;color:#000">值</div>
<div class="ui" style="left:984px;top:166px;width:56px;text-align:center;font-size:15px;color:#000">保持</div>
<div class="ui" style="left:1040px;top:166px;width:57px;text-align:center;font-size:15px;color:#000">常数</div>
<div class="ui" style="left:1097px;top:166px;width:385px;text-align:center;font-size:13px;color:#000">注释 1</div>
<div class="ui" style="left:1482px;top:166px;width:385px;text-align:center;font-size:13px;color:#000">注释 2</div>
<div class="ui" style="left:1867px;top:166px;width:385px;text-align:center;font-size:13px;color:#000">注释 3</div>
<div style="position:absolute;left:532px;top:166px;width:1624px;height:147px;overflow:hidden">
<div class="ml " style="left:56.0px;top:20.0px;line-height:20px;font-size:16px"><i style="width:30.00px;color:#fff"><b style="transform:scaleX(0.7800)">nInx</b></i></div>
<div class="ml " style="left:219.0px;top:20.0px;line-height:20px;font-size:16px"><i style="width:30.00px;color:#000"><b style="transform:scaleX(0.7800)">UINT</b></i></div>
<div style="position:absolute;left:474px;top:24px;width:13px;height:13px;background:#fff;border:1px solid #8a8a8a"></div>
<div style="position:absolute;left:530px;top:24px;width:13px;height:13px;background:#fff;border:1px solid #8a8a8a"></div>
<div class="ml " style="left:56.0px;top:40.0px;line-height:20px;font-size:16px"><i style="width:97.50px;color:#000"><b style="transform:scaleX(0.7800)">MC_UnitEnable</b></i></div>
<div class="ml " style="left:219.0px;top:40.0px;line-height:20px;font-size:16px"><i style="width:97.50px;color:#000"><b style="transform:scaleX(0.7800)">MC_UnitEnable</b></i></div>
<div style="position:absolute;left:474px;top:44px;width:13px;height:13px;background:#fff;border:1px solid #8a8a8a"></div>
<div style="position:absolute;left:530px;top:44px;width:13px;height:13px;background:#fff;border:1px solid #8a8a8a"></div>
<div class="ml " style="left:56.0px;top:60.0px;line-height:20px;font-size:16px"><i style="width:90.00px;color:#000"><b style="transform:scaleX(0.7800)">GET_AXIS_REF</b></i></div>
<div class="ml " style="left:219.0px;top:60.0px;line-height:20px;font-size:16px"><i style="width:157.50px;color:#000"><b style="transform:scaleX(0.7800)">ARRAY[0..31] OF GET_A</b></i></div>
<svg style="left:33px;top:65px" width="6" height="10"><path d="M0 0L6 5L0 10Z" fill="#333"/></svg>
<div style="position:absolute;left:474px;top:64px;width:13px;height:13px;background:#fff;border:1px solid #8a8a8a"></div>
<div style="position:absolute;left:530px;top:64px;width:13px;height:13px;background:#fff;border:1px solid #8a8a8a"></div>
<div class="ml " style="left:56.0px;top:80.0px;line-height:20px;font-size:16px"><i style="width:52.50px;color:#000"><b style="transform:scaleX(0.7800)">MC_Home</b></i></div>
<div class="ml " style="left:219.0px;top:80.0px;line-height:20px;font-size:16px"><i style="width:157.50px;color:#000"><b style="transform:scaleX(0.7800)">ARRAY[0..31] OF MC_Ho</b></i></div>
<svg style="left:33px;top:85px" width="6" height="10"><path d="M0 0L6 5L0 10Z" fill="#333"/></svg>
<div style="position:absolute;left:474px;top:84px;width:13px;height:13px;background:#fff;border:1px solid #8a8a8a"></div>
<div style="position:absolute;left:530px;top:84px;width:13px;height:13px;background:#fff;border:1px solid #8a8a8a"></div>
<div class="ml " style="left:56.0px;top:100.0px;line-height:20px;font-size:16px"><i style="width:45.00px;color:#000"><b style="transform:scaleX(0.7800)">MC_Jog</b></i></div>
<div class="ml " style="left:219.0px;top:100.0px;line-height:20px;font-size:16px"><i style="width:157.50px;color:#000"><b style="transform:scaleX(0.7800)">ARRAY[0..31] OF MC_Jo</b></i></div>
<svg style="left:33px;top:105px" width="6" height="10"><path d="M0 0L6 5L0 10Z" fill="#333"/></svg>
<div style="position:absolute;left:474px;top:104px;width:13px;height:13px;background:#fff;border:1px solid #8a8a8a"></div>
<div style="position:absolute;left:530px;top:104px;width:13px;height:13px;background:#fff;border:1px solid #8a8a8a"></div>
<div class="ml " style="left:56.0px;top:120.0px;line-height:20px;font-size:16px"><i style="width:112.50px;color:#000"><b style="transform:scaleX(0.7800)">MC_MoveAbsolute</b></i></div>
<div class="ml " style="left:219.0px;top:120.0px;line-height:20px;font-size:16px"><i style="width:157.50px;color:#000"><b style="transform:scaleX(0.7800)">ARRAY[0..31] OF MC_Mo</b></i></div>
<svg style="left:33px;top:125px" width="6" height="10"><path d="M0 0L6 5L0 10Z" fill="#333"/></svg>
<div style="position:absolute;left:474px;top:124px;width:13px;height:13px;background:#fff;border:1px solid #8a8a8a"></div>
<div style="position:absolute;left:530px;top:124px;width:13px;height:13px;background:#fff;border:1px solid #8a8a8a"></div>
<div class="ml " style="left:56.0px;top:140.0px;line-height:20px;font-size:16px"><i style="width:112.50px;color:#000"><b style="transform:scaleX(0.7800)">MC_MoveRelative</b></i></div>
<div class="ml " style="left:219.0px;top:140.0px;line-height:20px;font-size:16px"><i style="width:157.50px;color:#000"><b style="transform:scaleX(0.7800)">ARRAY[0..31] OF MC_Mo</b></i></div>
<svg style="left:33px;top:145px" width="6" height="10"><path d="M0 0L6 5L0 10Z" fill="#333"/></svg>
<div style="position:absolute;left:474px;top:144px;width:13px;height:13px;background:#fff;border:1px solid #8a8a8a"></div>
<div style="position:absolute;left:530px;top:144px;width:13px;height:13px;background:#fff;border:1px solid #8a8a8a"></div>
</div>
<div style="position:absolute;left:532px;top:314px;width:1624px;height:22px;background:#f0f0f0"></div>
<div style="position:absolute;left:520px;top:336px;width:1636px;height:14px;background:#f5f5f5"></div>
<div style="position:absolute;left:553px;top:325px;width:128px;height:3px;background:#858585;border-radius:1px"></div>
<div style="position:absolute;left:455px;top:361px;width:1701px;height:1148px;background:#f0fff0"></div>
<div style="position:absolute;left:455px;top:361px;width:165px;height:1148px;background:#d5e5fc;border-left:1px solid #a8a8a8"></div>
<div style="position:absolute;left:455px;top:361px;width:1701px;height:31px;background:#d5e5fc;border-top:1px solid #a0a0a0;border-bottom:1px solid #a0a0a0"></div>
<div style="position:absolute;left:564px;top:361px;width:1px;height:1148px;background:#a0a0a0"></div>
<div style="position:absolute;left:618px;top:392px;width:2px;height:1117px;background:#000"></div>
<div style="position:absolute;left:619px;top:361px;width:186px;height:31px;border-top:2px solid #707070;border-left:2px solid #707070"></div>
<div style="position:absolute;left:804px;top:362px;width:1px;height:30px;background:#a0a0a0"></div>
<div style="position:absolute;left:620px;top:362px;width:185px;text-align:center;font-family:'Liberation Serif',serif;font-size:29px;line-height:30px;color:#111">1</div>
<div style="position:absolute;left:989px;top:362px;width:1px;height:30px;background:#a0a0a0"></div>
<div style="position:absolute;left:805px;top:362px;width:185px;text-align:center;font-family:'Liberation Serif',serif;font-size:29px;line-height:30px;color:#111">2</div>
<div style="position:absolute;left:1174px;top:362px;width:1px;height:30px;background:#a0a0a0"></div>
<div style="position:absolute;left:990px;top:362px;width:185px;text-align:center;font-family:'Liberation Serif',serif;font-size:29px;line-height:30px;color:#111">3</div>
<div style="position:absolute;left:1359px;top:362px;width:1px;height:30px;background:#a0a0a0"></div>
<div style="position:absolute;left:1175px;top:362px;width:185px;text-align:center;font-family:'Liberation Serif',serif;font-size:29px;line-height:30px;color:#111">4</div>
<div style="position:absolute;left:1544px;top:362px;width:1px;height:30px;background:#a0a0a0"></div>
<div style="position:absolute;left:1360px;top:362px;width:185px;text-align:center;font-family:'Liberation Serif',serif;font-size:29px;line-height:30px;color:#111">5</div>
<div style="position:absolute;left:1729px;top:362px;width:1px;height:30px;background:#a0a0a0"></div>
<div style="position:absolute;left:1545px;top:362px;width:185px;text-align:center;font-family:'Liberation Serif',serif;font-size:29px;line-height:30px;color:#111">6</div>
<div style="position:absolute;left:1914px;top:362px;width:1px;height:30px;background:#a0a0a0"></div>
<div style="position:absolute;left:1730px;top:362px;width:185px;text-align:center;font-family:'Liberation Serif',serif;font-size:29px;line-height:30px;color:#111">7</div>
<div style="position:absolute;left:2099px;top:362px;width:1px;height:30px;background:#a0a0a0"></div>
<div style="position:absolute;left:1915px;top:362px;width:185px;text-align:center;font-family:'Liberation Serif',serif;font-size:29px;line-height:30px;color:#111">8</div>
<div style="position:absolute;left:455px;top:1509px;width:1701px;height:1px;background:#a0a0a0"></div>
<div style="position:absolute;left:620px;top:392px;width:1536px;height:1117px;overflow:hidden">
<div class="ml " style="left:13.5px;top:3.5px;line-height:40px;font-size:29px"><i style="width:58.12px;color:#1a1a1a"><b style="transform:scaleX(0.8333)">    </b></i><i style="width:29.06px;color:#2290cf"><b style="transform:scaleX(0.8333)">AX</b></i><i style="width:14.53px;color:#1a1a1a"><b style="transform:scaleX(0.8333)">[</b></i><i style="width:58.12px;color:#a21c1c"><b style="transform:scaleX(0.8333)">nInx</b></i><i style="width:14.53px;color:#1a1a1a"><b style="transform:scaleX(0.8333)">]</b></i><i style="width:14.53px;color:#2290cf"><b style="transform:scaleX(0.8333)">.</b></i><i style="width:87.18px;color:#2290cf"><b style="transform:scaleX(0.8333)">AsPara</b></i><i style="width:14.53px;color:#2290cf"><b style="transform:scaleX(0.8333)">.</b></i><i style="width:130.77px;color:#2290cf"><b style="transform:scaleX(0.8333)">SlowSpeed</b></i><i style="width:14.53px;color:#1a1a1a"><b style="transform:scaleX(0.8333)"> </b></i><i style="width:29.06px;color:#1a1a1a"><b style="transform:scaleX(0.8333)">:=</b></i><i style="width:14.53px;color:#1a1a1a"><b style="transform:scaleX(0.8333)"> </b></i><i style="width:29.06px;color:#2290cf"><b style="transform:scaleX(0.8333)">AX</b></i><i style="width:14.53px;color:#1a1a1a"><b style="transform:scaleX(0.8333)">[</b></i><i style="width:43.59px;color:#2290cf"><b style="transform:scaleX(0.8333)">nAs</b></i><i style="width:14.53px;color:#2290cf"><b style="transform:scaleX(0.8333)">.</b></i><i class="cj" style="width:174.36px;color:#2290cf;font-size:29px">前升降流水线</i><i style="width:14.53px;color:#1a1a1a"><b style="transform:scaleX(0.8333)">]</b></i><i style="width:14.53px;color:#2290cf"><b style="transform:scaleX(0.8333)">.</b></i><i style="width:87.18px;color:#2290cf"><b style="transform:scaleX(0.8333)">AsPara</b></i><i style="width:14.53px;color:#2290cf"><b style="transform:scaleX(0.8333)">.</b></i><i style="width:130.77px;color:#2290cf"><b style="transform:scaleX(0.8333)">SlowSpeed</b></i><i style="width:14.53px;color:#1a1a1a"><b style="transform:scaleX(0.8333)">;</b></i></div>
<div class="ml " style="left:13.5px;top:36.7px;line-height:40px;font-size:29px"><i style="width:101.71px;color:#0a0aff"><b style="transform:scaleX(0.8333)">END_FOR</b></i><i style="width:14.53px;color:#1a1a1a"><b style="transform:scaleX(0.8333)">;</b></i></div>
<div class="ml " style="left:13.5px;top:103.1px;line-height:40px;font-size:29px"><i style="width:29.06px;color:#0a0aff"><b style="transform:scaleX(0.8333)">IF</b></i><i style="width:14.53px;color:#1a1a1a"><b style="transform:scaleX(0.8333)"> </b></i><i style="width:116.24px;color:#2290cf"><b style="transform:scaleX(0.8333)">ModuleEN</b></i><i style="width:14.53px;color:#2290cf"><b style="transform:scaleX(0.8333)">.</b></i><i style="width:58.12px;color:#2290cf"><b style="transform:scaleX(0.8333)">Done</b></i><i style="width:14.53px;color:#1a1a1a"><b style="transform:scaleX(0.8333)"> </b></i><i style="width:58.12px;color:#0a0aff"><b style="transform:scaleX(0.8333)">THEN</b></i></div>
<div class="ml " style="left:13.5px;top:136.3px;line-height:40px;font-size:29px"><i style="width:58.12px;color:#1a1a1a"><b style="transform:scaleX(0.8333)">    </b></i><i style="width:43.59px;color:#0a0aff"><b style="transform:scaleX(0.8333)">FOR</b></i><i style="width:14.53px;color:#1a1a1a"><b style="transform:scaleX(0.8333)"> </b></i><i style="width:58.12px;color:#a21c1c"><b style="transform:scaleX(0.8333)">nInx</b></i><i style="width:14.53px;color:#1a1a1a"><b style="transform:scaleX(0.8333)"> </b></i><i style="width:29.06px;color:#1a1a1a"><b style="transform:scaleX(0.8333)">:=</b></i><i style="width:14.53px;color:#1a1a1a"><b style="transform:scaleX(0.8333)"> </b></i><i style="width:14.53px;color:#1a1a1a"><b style="transform:scaleX(0.8333)">0</b></i><i style="width:14.53px;color:#1a1a1a"><b style="transform:scaleX(0.8333)"> </b></i><i style="width:29.06px;color:#0a0aff"><b style="transform:scaleX(0.8333)">TO</b></i><i style="width:14.53px;color:#1a1a1a"><b style="transform:scaleX(0.8333)"> </b></i><i style="width:43.59px;color:#2290cf"><b style="transform:scaleX(0.8333)">nAs</b></i><i style="width:14.53px;color:#2290cf"><b style="transform:scaleX(0.8333)">.</b></i><i style="width:72.65px;color:#2290cf"><b style="transform:scaleX(0.8333)">AsNum</b></i><i style="width:14.53px;color:#1a1a1a"><b style="transform:scaleX(0.8333)"> </b></i><i style="width:18.03px;color:#1a1a1a"><b style="transform:scaleX(0.8333)">-</b></i><i style="width:14.53px;color:#1a1a1a"><b style="transform:scaleX(0.8333)"> </b></i><i style="width:14.53px;color:#1a1a1a"><b style="transform:scaleX(0.8333)">1</b></i><i style="width:14.53px;color:#1a1a1a"><b style="transform:scaleX(0.8333)"> </b></i><i style="width:29.06px;color:#0a0aff"><b style="transform:scaleX(0.8333)">BY</b></i><i style="width:14.53px;color:#1a1a1a"><b style="transform:scaleX(0.8333)"> </b></i><i style="width:14.53px;color:#1a1a1a"><b style="transform:scaleX(0.8333)">1</b></i><i style="width:14.53px;color:#1a1a1a"><b style="transform:scaleX(0.8333)"> </b></i><i style="width:29.06px;color:#0a0aff"><b style="transform:scaleX(0.8333)">DO</b></i></div>
<div class="ml " style="left:13.5px;top:169.5px;line-height:40px;font-size:29px"><i style="width:116.24px;color:#1a1a1a"><b style="transform:scaleX(0.8333)">        </b></i><i style="width:29.06px;color:#1f9c1f"><b style="transform:scaleX(0.8333)">//</b></i><i class="cj" style="width:87.18px;color:#1f9c1f;font-size:29px">轴引用</i></div>
<div class="ml " style="left:13.5px;top:202.7px;line-height:40px;font-size:29px"><i style="width:116.24px;color:#1a1a1a"><b style="transform:scaleX(0.8333)">        </b></i><i style="width:174.36px;color:#a21c1c"><b style="transform:scaleX(0.8333)">GET_AXIS_REF</b></i><i style="width:14.53px;color:#1a1a1a"><b style="transform:scaleX(0.8333)">[</b></i><i style="width:58.12px;color:#a21c1c"><b style="transform:scaleX(0.8333)">nInx</b></i><i style="width:14.53px;color:#1a1a1a"><b style="transform:scaleX(0.8333)">]</b></i><i style="width:14.53px;color:#1a1a1a"><b style="transform:scaleX(0.8333)">(</b></i><i style="width:72.65px;color:#2290cf"><b style="transform:scaleX(0.8333)">AXREF</b></i><i style="width:14.53px;color:#1a1a1a"><b style="transform:scaleX(0.8333)">[</b></i><i style="width:58.12px;color:#a21c1c"><b style="transform:scaleX(0.8333)">nInx</b></i><i style="width:14.53px;color:#1a1a1a"><b style="transform:scaleX(0.8333)">]</b></i><i style="width:14.53px;color:#1a1a1a"><b style="transform:scaleX(0.8333)">,</b></i><i style="width:14.53px;color:#1a1a1a"><b style="transform:scaleX(0.8333)">1</b></i><i style="width:14.53px;color:#1a1a1a"><b style="transform:scaleX(0.8333)">,</b></i><i style="width:58.12px;color:#a21c1c"><b style="transform:scaleX(0.8333)">nInx</b></i><i style="width:14.53px;color:#1a1a1a"><b style="transform:scaleX(0.8333)">+</b></i><i style="width:14.53px;color:#1a1a1a"><b style="transform:scaleX(0.8333)">1</b></i><i style="width:14.53px;color:#1a1a1a"><b style="transform:scaleX(0.8333)">)</b></i><i style="width:14.53px;color:#1a1a1a"><b style="transform:scaleX(0.8333)">;</b></i></div>
<div class="ml " style="left:13.5px;top:269.1px;line-height:40px;font-size:29px"><i style="width:116.24px;color:#1a1a1a"><b style="transform:scaleX(0.8333)">        </b></i><i style="width:29.06px;color:#1f9c1f"><b style="transform:scaleX(0.8333)">//</b></i><i class="cj" style="width:87.18px;color:#1f9c1f;font-size:29px">轴使能</i></div>
<div class="ml " style="left:13.5px;top:302.3px;line-height:40px;font-size:29px"><i style="width:116.24px;color:#1a1a1a"><b style="transform:scaleX(0.8333)">        </b></i><i style="width:116.24px;color:#a21c1c"><b style="transform:scaleX(0.8333)">MC_Power</b></i><i style="width:14.53px;color:#1a1a1a"><b style="transform:scaleX(0.8333)">[</b></i><i style="width:58.12px;color:#a21c1c"><b style="transform:scaleX(0.8333)">nInx</b></i><i style="width:14.53px;color:#1a1a1a"><b style="transform:scaleX(0.8333)">]</b></i><i style="width:14.53px;color:#1a1a1a"><b style="transform:scaleX(0.8333)">(</b></i><i style="width:72.65px;color:#2290cf"><b style="transform:scaleX(0.8333)">AXREF</b></i><i style="width:14.53px;color:#1a1a1a"><b style="transform:scaleX(0.8333)">[</b></i><i style="width:58.12px;color:#a21c1c"><b style="transform:scaleX(0.8333)">nInx</b></i><i style="width:14.53px;color:#1a1a1a"><b style="transform:scaleX(0.8333)">]</b></i><i style="width:14.53px;color:#1a1a1a"><b style="transform:scaleX(0.8333)">,</b></i><i style="width:29.06px;color:#2290cf"><b style="transform:scaleX(0.8333)">AX</b></i><i style="width:14.53px;color:#1a1a1a"><b style="transform:scaleX(0.8333)">[</b></i><i style="width:58.12px;color:#a21c1c"><b style="transform:scaleX(0.8333)">nInx</b></i><i style="width:14.53px;color:#1a1a1a"><b style="transform:scaleX(0.8333)">]</b></i><i style="width:14.53px;color:#2290cf"><b style="transform:scaleX(0.8333)">.</b></i><i style="width:116.24px;color:#2290cf"><b style="transform:scaleX(0.8333)">AsEnable</b></i><i style="width:14.53px;color:#2290cf"><b style="transform:scaleX(0.8333)">.</b></i><i style="width:87.18px;color:#2290cf"><b style="transform:scaleX(0.8333)">Enable</b></i><i style="width:14.53px;color:#1a1a1a"><b style="transform:scaleX(0.8333)">)</b></i><i style="width:14.53px;color:#1a1a1a"><b style="transform:scaleX(0.8333)">;</b></i></div>
<div class="ml " style="left:13.5px;top:368.7px;line-height:40px;font-size:29px"><i style="width:116.24px;color:#1a1a1a"><b style="transform:scaleX(0.8333)">        </b></i><i style="width:29.06px;color:#1f9c1f"><b style="transform:scaleX(0.8333)">//</b></i><i class="cj" style="width:87.18px;color:#1f9c1f;font-size:29px">轴复位</i></div>
<div class="ml " style="left:13.5px;top:401.9px;line-height:40px;font-size:29px"><i style="width:116.24px;color:#1a1a1a"><b style="transform:scaleX(0.8333)">        </b></i><i style="width:101.71px;color:#a21c1c"><b style="transform:scaleX(0.8333)">MC_Home</b></i><i style="width:14.53px;color:#1a1a1a"><b style="transform:scaleX(0.8333)">[</b></i><i style="width:58.12px;color:#a21c1c"><b style="transform:scaleX(0.8333)">nInx</b></i><i style="width:14.53px;color:#1a1a1a"><b style="transform:scaleX(0.8333)">]</b></i><i style="width:14.53px;color:#1a1a1a"><b style="transform:scaleX(0.8333)">(</b></i></div>
<div class="ml " style="left:13.5px;top:435.1px;line-height:40px;font-size:29px"><i style="width:116.24px;color:#1a1a1a"><b style="transform:scaleX(0.8333)">        </b></i><i style="width:58.12px;color:#9b2ff2"><b style="transform:scaleX(0.8333)">Axis</b></i><i style="width:14.53px;color:#1a1a1a"><b style="transform:scaleX(0.8333)"> </b></i><i style="width:29.06px;color:#1a1a1a"><b style="transform:scaleX(0.8333)">:=</b></i><i style="width:14.53px;color:#1a1a1a"><b style="transform:scaleX(0.8333)"> </b></i><i style="width:72.65px;color:#2290cf"><b style="transform:scaleX(0.8333)">AXREF</b></i><i style="width:14.53px;color:#1a1a1a"><b style="transform:scaleX(0.8333)">[</b></i><i style="width:58.12px;color:#a21c1c"><b style="transform:scaleX(0.8333)">nInx</b></i><i style="width:14.53px;color:#1a1a1a"><b style="transform:scaleX(0.8333)">]</b></i><i style="width:14.53px;color:#1a1a1a"><b style="transform:scaleX(0.8333)">,</b></i></div>
<div class="ml " style="left:13.5px;top:468.3px;line-height:40px;font-size:29px"><i style="width:116.24px;color:#1a1a1a"><b style="transform:scaleX(0.8333)">        </b></i><i style="width:101.71px;color:#9b2ff2"><b style="transform:scaleX(0.8333)">Execute</b></i><i style="width:14.53px;color:#1a1a1a"><b style="transform:scaleX(0.8333)"> </b></i><i style="width:29.06px;color:#1a1a1a"><b style="transform:scaleX(0.8333)">:=</b></i><i style="width:14.53px;color:#1a1a1a"><b style="transform:scaleX(0.8333)"> </b></i><i style="width:29.06px;color:#2290cf"><b style="transform:scaleX(0.8333)">AX</b></i><i style="width:14.53px;color:#1a1a1a"><b style="transform:scaleX(0.8333)">[</b></i><i style="width:58.12px;color:#a21c1c"><b style="transform:scaleX(0.8333)">nInx</b></i><i style="width:14.53px;color:#1a1a1a"><b style="transform:scaleX(0.8333)">]</b></i><i style="width:14.53px;color:#2290cf"><b style="transform:scaleX(0.8333)">.</b></i><i style="width:87.18px;color:#2290cf"><b style="transform:scaleX(0.8333)">AsHome</b></i><i style="width:14.53px;color:#2290cf"><b style="transform:scaleX(0.8333)">.</b></i><i style="width:101.71px;color:#2290cf"><b style="transform:scaleX(0.8333)">Execute</b></i><i style="width:14.53px;color:#1a1a1a"><b style="transform:scaleX(0.8333)">,</b></i></div>
<div class="ml " style="left:13.5px;top:501.5px;line-height:40px;font-size:29px"><i style="width:116.24px;color:#1a1a1a"><b style="transform:scaleX(0.8333)">        </b></i><i style="width:116.24px;color:#9b2ff2"><b style="transform:scaleX(0.8333)">Position</b></i><i style="width:14.53px;color:#1a1a1a"><b style="transform:scaleX(0.8333)"> </b></i><i style="width:29.06px;color:#1a1a1a"><b style="transform:scaleX(0.8333)">:=</b></i><i style="width:14.53px;color:#1a1a1a"><b style="transform:scaleX(0.8333)"> </b></i><i style="width:14.53px;color:#1a1a1a"><b style="transform:scaleX(0.8333)">0</b></i><i style="width:14.53px;color:#1a1a1a"><b style="transform:scaleX(0.8333)">,</b></i></div>
<div class="ml " style="left:13.5px;top:534.7px;line-height:40px;font-size:29px"><i style="width:116.24px;color:#1a1a1a"><b style="transform:scaleX(0.8333)">        </b></i><i style="width:58.12px;color:#9b2ff2"><b style="transform:scaleX(0.8333)">Busy</b></i><i style="width:14.53px;color:#1a1a1a"><b style="transform:scaleX(0.8333)"> </b></i><i style="width:29.06px;color:#1a1a1a"><b style="transform:scaleX(0.8333)">=&gt;</b></i><i style="width:14.53px;color:#1a1a1a"><b style="transform:scaleX(0.8333)"> </b></i><i style="width:29.06px;color:#2290cf"><b style="transform:scaleX(0.8333)">AX</b></i><i style="width:14.53px;color:#1a1a1a"><b style="transform:scaleX(0.8333)">[</b></i><i style="width:58.12px;color:#a21c1c"><b style="transform:scaleX(0.8333)">nInx</b></i><i style="width:14.53px;color:#1a1a1a"><b style="transform:scaleX(0.8333)">]</b></i><i style="width:14.53px;color:#2290cf"><b style="transform:scaleX(0.8333)">.</b></i><i style="width:87.18px;color:#2290cf"><b style="transform:scaleX(0.8333)">AsHome</b></i><i style="width:14.53px;color:#2290cf"><b style="transform:scaleX(0.8333)">.</b></i><i style="width:58.12px;color:#2290cf"><b style="transform:scaleX(0.8333)">Busy</b></i><i style="width:14.53px;color:#1a1a1a"><b style="transform:scaleX(0.8333)">,</b></i></div>
<div class="ml " style="left:13.5px;top:567.9px;line-height:40px;font-size:29px"><i style="width:116.24px;color:#1a1a1a"><b style="transform:scaleX(0.8333)">        </b></i><i style="width:58.12px;color:#9b2ff2"><b style="transform:scaleX(0.8333)">Done</b></i><i style="width:14.53px;color:#1a1a1a"><b style="transform:scaleX(0.8333)"> </b></i><i style="width:29.06px;color:#1a1a1a"><b style="transform:scaleX(0.8333)">=&gt;</b></i><i style="width:14.53px;color:#1a1a1a"><b style="transform:scaleX(0.8333)"> </b></i><i style="width:29.06px;color:#2290cf"><b style="transform:scaleX(0.8333)">AX</b></i><i style="width:14.53px;color:#1a1a1a"><b style="transform:scaleX(0.8333)">[</b></i><i style="width:58.12px;color:#a21c1c"><b style="transform:scaleX(0.8333)">nInx</b></i><i style="width:14.53px;color:#1a1a1a"><b style="transform:scaleX(0.8333)">]</b></i><i style="width:14.53px;color:#2290cf"><b style="transform:scaleX(0.8333)">.</b></i><i style="width:87.18px;color:#2290cf"><b style="transform:scaleX(0.8333)">AsHome</b></i><i style="width:14.53px;color:#2290cf"><b style="transform:scaleX(0.8333)">.</b></i><i style="width:58.12px;color:#2290cf"><b style="transform:scaleX(0.8333)">Done</b></i><i style="width:14.53px;color:#1a1a1a"><b style="transform:scaleX(0.8333)">)</b></i><i style="width:14.53px;color:#1a1a1a"><b style="transform:scaleX(0.8333)">;</b></i></div>
<div class="ml " style="left:13.5px;top:634.3px;line-height:40px;font-size:29px"><i style="width:116.24px;color:#1a1a1a"><b style="transform:scaleX(0.8333)">        </b></i><i style="width:29.06px;color:#1f9c1f"><b style="transform:scaleX(0.8333)">//</b></i><i class="cj" style="width:29.06px;color:#1f9c1f;font-size:29px">轴</i><i style="width:43.59px;color:#1f9c1f"><b style="transform:scaleX(0.8333)">JOG</b></i></div>
<div class="ml " style="left:13.5px;top:667.5px;line-height:40px;font-size:29px"><i style="width:116.24px;color:#1a1a1a"><b style="transform:scaleX(0.8333)">        </b></i><i style="width:29.06px;color:#0a0aff"><b style="transform:scaleX(0.8333)">IF</b></i><i style="width:14.53px;color:#1a1a1a"><b style="transform:scaleX(0.8333)"> </b></i><i style="width:58.12px;color:#a21c1c"><b style="transform:scaleX(0.8333)">nInx</b></i><i style="width:14.53px;color:#1a1a1a"><b style="transform:scaleX(0.8333)"> </b></i><i style="width:14.53px;color:#1a1a1a"><b style="transform:scaleX(0.8333)">=</b></i><i style="width:14.53px;color:#1a1a1a"><b style="transform:scaleX(0.8333)"> </b></i><i style="width:43.59px;color:#2290cf"><b style="transform:scaleX(0.8333)">nAs</b></i><i style="width:14.53px;color:#2290cf"><b style="transform:scaleX(0.8333)">.</b></i><i class="cj" style="width:116.24px;color:#2290cf;font-size:29px">压合下压</i><i style="width:14.53px;color:#2290cf"><b style="transform:scaleX(0.8333)">Z</b></i><i class="cj" style="width:29.06px;color:#2290cf;font-size:29px">轴</i><i style="width:14.53px;color:#1a1a1a"><b style="transform:scaleX(0.8333)"> </b></i><i style="width:43.59px;color:#0a0aff"><b style="transform:scaleX(0.8333)">AND</b></i><i style="width:14.53px;color:#1a1a1a"><b style="transform:scaleX(0.8333)"> </b></i><i style="width:101.71px;color:#2290cf"><b style="transform:scaleX(0.8333)">UnitCmd</b></i><i style="width:14.53px;color:#1a1a1a"><b style="transform:scaleX(0.8333)">[</b></i><i style="width:43.59px;color:#2290cf"><b style="transform:scaleX(0.8333)">nWk</b></i><i style="width:14.53px;color:#2290cf"><b style="transform:scaleX(0.8333)">.</b></i><i class="cj" style="width:145.30px;color:#2290cf;font-size:29px">自动压合上</i><i style="width:14.53px;color:#1a1a1a"><b style="transform:scaleX(0.8333)">]</b></i><i style="width:14.53px;color:#1a1a1a"><b style="transform:scaleX(0.8333)"> </b></i><i style="width:14.53px;color:#1a1a1a"><b style="transform:scaleX(0.8333)">=</b></i><i style="width:14.53px;color:#1a1a1a"><b style="transform:scaleX(0.8333)"> </b></i><i style="width:116.24px;color:#2290cf"><b style="transform:scaleX(0.8333)">nUnitCmd</b></i><i style="width:14.53px;color:#2290cf"><b style="transform:scaleX(0.8333)">.</b></i><i style="width:72.65px;color:#2290cf"><b style="transform:scaleX(0.8333)">Press</b></i><i style="width:14.53px;color:#1a1a1a"><b style="transform:scaleX(0.8333)"> </b></i><i style="width:58.12px;color:#0a0aff"><b style="transform:scaleX(0.8333)">THEN</b></i></div>
<div class="ml " style="left:13.5px;top:700.7px;line-height:40px;font-size:29px"><i style="width:174.36px;color:#1a1a1a"><b style="transform:scaleX(0.8333)">            </b></i><i style="width:14.53px;color:#1a1a1a"><b style="transform:scaleX(0.8333)">;</b></i></div>
<div class="ml " style="left:13.5px;top:733.9px;line-height:40px;font-size:29px"><i style="width:116.24px;color:#1a1a1a"><b style="transform:scaleX(0.8333)">        </b></i><i style="width:58.12px;color:#0a0aff"><b style="transform:scaleX(0.8333)">ELSE</b></i></div>
<div class="ml " style="left:13.5px;top:767.1px;line-height:40px;font-size:29px"><i style="width:174.36px;color:#1a1a1a"><b style="transform:scaleX(0.8333)">            </b></i><i style="width:29.06px;color:#2290cf"><b style="transform:scaleX(0.8333)">AX</b></i><i style="width:14.53px;color:#1a1a1a"><b style="transform:scaleX(0.8333)">[</b></i><i style="width:58.12px;color:#a21c1c"><b style="transform:scaleX(0.8333)">nInx</b></i><i style="width:14.53px;color:#1a1a1a"><b style="transform:scaleX(0.8333)">]</b></i><i style="width:14.53px;color:#2290cf"><b style="transform:scaleX(0.8333)">.</b></i><i style="width:72.65px;color:#2290cf"><b style="transform:scaleX(0.8333)">AsJog</b></i><i style="width:14.53px;color:#2290cf"><b style="transform:scaleX(0.8333)">.</b></i><i style="width:72.65px;color:#2290cf"><b style="transform:scaleX(0.8333)">Speed</b></i><i style="width:14.53px;color:#1a1a1a"><b style="transform:scaleX(0.8333)"> </b></i><i style="width:29.06px;color:#1a1a1a"><b style="transform:scaleX(0.8333)">:=</b></i><i style="width:14.53px;color:#1a1a1a"><b style="transform:scaleX(0.8333)"> </b></i><i style="width:29.06px;color:#2290cf"><b style="transform:scaleX(0.8333)">AX</b></i><i style="width:14.53px;color:#1a1a1a"><b style="transform:scaleX(0.8333)">[</b></i><i style="width:58.12px;color:#a21c1c"><b style="transform:scaleX(0.8333)">nInx</b></i><i style="width:14.53px;color:#1a1a1a"><b style="transform:scaleX(0.8333)">]</b></i><i style="width:14.53px;color:#2290cf"><b style="transform:scaleX(0.8333)">.</b></i><i style="width:87.18px;color:#2290cf"><b style="transform:scaleX(0.8333)">AsPara</b></i><i style="width:14.53px;color:#2290cf"><b style="transform:scaleX(0.8333)">.</b></i><i style="width:116.24px;color:#2290cf"><b style="transform:scaleX(0.8333)">JogSpeed</b></i><i style="width:14.53px;color:#1a1a1a"><b style="transform:scaleX(0.8333)"> </b></i><i style="width:14.53px;color:#1a1a1a"><b style="transform:scaleX(0.8333)">*</b></i><i style="width:14.53px;color:#1a1a1a"><b style="transform:scaleX(0.8333)"> </b></i><i style="width:43.59px;color:#2290cf"><b style="transform:scaleX(0.8333)">SPR</b></i><i style="width:14.53px;color:#1a1a1a"><b style="transform:scaleX(0.8333)"> </b></i><i style="width:14.53px;color:#1a1a1a"><b style="transform:scaleX(0.8333)">/</b></i><i style="width:14.53px;color:#1a1a1a"><b style="transform:scaleX(0.8333)"> </b></i><i style="width:43.59px;color:#1a1a1a"><b style="transform:scaleX(0.8333)">100</b></i><i style="width:14.53px;color:#1a1a1a"><b style="transform:scaleX(0.8333)">;</b></i></div>
<div class="ml " style="left:13.5px;top:800.3px;line-height:40px;font-size:29px"><i style="width:116.24px;color:#1a1a1a"><b style="transform:scaleX(0.8333)">        </b></i><i style="width:87.18px;color:#0a0aff"><b style="transform:scaleX(0.8333)">END_IF</b></i><i style="width:14.53px;color:#1a1a1a"><b style="transform:scaleX(0.8333)">;</b></i></div>
<div class="ml " style="left:13.5px;top:833.5px;line-height:40px;font-size:29px"><i style="width:116.24px;color:#1a1a1a"><b style="transform:scaleX(0.8333)">        </b></i><i style="width:101.71px;color:#a21c1c"><b style="transform:scaleX(0.8333)">nJogCon</b></i><i style="width:14.53px;color:#1a1a1a"><b style="transform:scaleX(0.8333)"> </b></i><i style="width:29.06px;color:#1a1a1a"><b style="transform:scaleX(0.8333)">:=</b></i><i style="width:14.53px;color:#1a1a1a"><b style="transform:scaleX(0.8333)"> </b></i><i style="width:14.53px;color:#1a1a1a"><b style="transform:scaleX(0.8333)">(</b></i><i style="width:43.59px;color:#0a0aff"><b style="transform:scaleX(0.8333)">NOT</b></i><i style="width:14.53px;color:#1a1a1a"><b style="transform:scaleX(0.8333)"> </b></i><i style="width:101.71px;color:#2290cf"><b style="transform:scaleX(0.8333)">JogMode</b></i><i style="width:14.53px;color:#1a1a1a"><b style="transform:scaleX(0.8333)"> </b></i><i style="width:43.59px;color:#0a0aff"><b style="transform:scaleX(0.8333)">AND</b></i><i style="width:14.53px;color:#1a1a1a"><b style="transform:scaleX(0.8333)"> </b></i><i style="width:43.59px;color:#0a0aff"><b style="transform:scaleX(0.8333)">NOT</b></i><i style="width:14.53px;color:#1a1a1a"><b style="transform:scaleX(0.8333)"> </b></i><i style="width:72.65px;color:#2290cf"><b style="transform:scaleX(0.8333)">DevMr</b></i><i style="width:14.53px;color:#2290cf"><b style="transform:scaleX(0.8333)">.</b></i><i style="width:116.24px;color:#2290cf"><b style="transform:scaleX(0.8333)">DevManul</b></i><i style="width:14.53px;color:#1a1a1a"><b style="transform:scaleX(0.8333)">)</b></i><i style="width:14.53px;color:#1a1a1a"><b style="transform:scaleX(0.8333)">;</b></i></div>
<div class="ml " style="left:13.5px;top:866.7px;line-height:40px;font-size:29px"><i style="width:116.24px;color:#1a1a1a"><b style="transform:scaleX(0.8333)">        </b></i><i style="width:101.71px;color:#a21c1c"><b style="transform:scaleX(0.8333)">nJogCon</b></i><i style="width:14.53px;color:#1a1a1a"><b style="transform:scaleX(0.8333)"> </b></i><i style="width:29.06px;color:#1a1a1a"><b style="transform:scaleX(0.8333)">:=</b></i><i style="width:14.53px;color:#1a1a1a"><b style="transform:scaleX(0.8333)"> </b></i><i style="width:101.71px;color:#a21c1c"><b style="transform:scaleX(0.8333)">nJogCon</b></i><i style="width:14.53px;color:#1a1a1a"><b style="transform:scaleX(0.8333)"> </b></i><i style="width:29.06px;color:#0a0aff"><b style="transform:scaleX(0.8333)">OR</b></i><i style="width:14.53px;color:#1a1a1a"><b style="transform:scaleX(0.8333)"> </b></i><i style="width:14.53px;color:#1a1a1a"><b style="transform:scaleX(0.8333)">(</b></i><i style="width:58.12px;color:#a21c1c"><b style="transform:scaleX(0.8333)">nInx</b></i><i style="width:14.53px;color:#1a1a1a"><b style="transform:scaleX(0.8333)"> </b></i><i style="width:14.53px;color:#1a1a1a"><b style="transform:scaleX(0.8333)">=</b></i><i style="width:14.53px;color:#1a1a1a"><b style="transform:scaleX(0.8333)"> </b></i><i style="width:43.59px;color:#2290cf"><b style="transform:scaleX(0.8333)">nAs</b></i><i style="width:14.53px;color:#2290cf"><b style="transform:scaleX(0.8333)">.</b></i><i class="cj" style="width:116.24px;color:#2290cf;font-size:29px">压合下压</i><i style="width:14.53px;color:#2290cf"><b style="transform:scaleX(0.8333)">Z</b></i><i class="cj" style="width:29.06px;color:#2290cf;font-size:29px">轴</i><i style="width:14.53px;color:#1a1a1a"><b style="transform:scaleX(0.8333)"> </b></i><i style="width:43.59px;color:#0a0aff"><b style="transform:scaleX(0.8333)">AND</b></i><i style="width:14.53px;color:#1a1a1a"><b style="transform:scaleX(0.8333)"> </b></i><i style="width:101.71px;color:#2290cf"><b style="transform:scaleX(0.8333)">UnitCmd</b></i><i style="width:14.53px;color:#1a1a1a"><b style="transform:scaleX(0.8333)">[</b></i><i style="width:43.59px;color:#2290cf"><b style="transform:scaleX(0.8333)">nWk</b></i><i style="width:14.53px;color:#2290cf"><b style="transform:scaleX(0.8333)">.</b></i><i class="cj" style="width:145.30px;color:#2290cf;font-size:29px">自动压合上</i><i style="width:14.53px;color:#1a1a1a"><b style="transform:scaleX(0.8333)">]</b></i><i style="width:14.53px;color:#1a1a1a"><b style="transform:scaleX(0.8333)"> </b></i><i style="width:14.53px;color:#1a1a1a"><b style="transform:scaleX(0.8333)">=</b></i><i style="width:14.53px;color:#1a1a1a"><b style="transform:scaleX(0.8333)"> </b></i><i style="width:116.24px;color:#2290cf"><b style="transform:scaleX(0.8333)">nUnitCmd</b></i><i style="width:14.53px;color:#2290cf"><b style="transform:scaleX(0.8333)">.</b></i><i style="width:72.65px;color:#2290cf"><b style="transform:scaleX(0.8333)">Press</b></i><i style="width:14.53px;color:#1a1a1a"><b style="transform:scaleX(0.8333)">)</b></i><i style="width:14.53px;color:#1a1a1a"><b style="transform:scaleX(0.8333)">;</b></i></div>
<div class="ml " style="left:13.5px;top:899.9px;line-height:40px;font-size:29px"><i style="width:116.24px;color:#1a1a1a"><b style="transform:scaleX(0.8333)">        </b></i><i style="width:87.18px;color:#a21c1c"><b style="transform:scaleX(0.8333)">MC_Jog</b></i><i style="width:14.53px;color:#1a1a1a"><b style="transform:scaleX(0.8333)">[</b></i><i style="width:58.12px;color:#a21c1c"><b style="transform:scaleX(0.8333)">nInx</b></i><i style="width:14.53px;color:#1a1a1a"><b style="transform:scaleX(0.8333)">]</b></i><i style="width:14.53px;color:#1a1a1a"><b style="transform:scaleX(0.8333)">(</b></i></div>
<div class="ml " style="left:13.5px;top:933.1px;line-height:40px;font-size:29px"><i style="width:116.24px;color:#1a1a1a"><b style="transform:scaleX(0.8333)">        </b></i><i style="width:58.12px;color:#9b2ff2"><b style="transform:scaleX(0.8333)">Axis</b></i><i style="width:14.53px;color:#1a1a1a"><b style="transform:scaleX(0.8333)"> </b></i><i style="width:29.06px;color:#1a1a1a"><b style="transform:scaleX(0.8333)">:=</b></i><i style="width:14.53px;color:#1a1a1a"><b style="transform:scaleX(0.8333)"> </b></i><i style="width:72.65px;color:#2290cf"><b style="transform:scaleX(0.8333)">AXREF</b></i><i style="width:14.53px;color:#1a1a1a"><b style="transform:scaleX(0.8333)">[</b></i><i style="width:58.12px;color:#a21c1c"><b style="transform:scaleX(0.8333)">nInx</b></i><i style="width:14.53px;color:#1a1a1a"><b style="transform:scaleX(0.8333)">]</b></i><i style="width:14.53px;color:#1a1a1a"><b style="transform:scaleX(0.8333)">,</b></i></div>
<div class="ml " style="left:13.5px;top:966.3px;line-height:40px;font-size:29px"><i style="width:116.24px;color:#1a1a1a"><b style="transform:scaleX(0.8333)">        </b></i><i style="width:203.42px;color:#9b2ff2"><b style="transform:scaleX(0.8333)">PositiveEnable</b></i><i style="width:14.53px;color:#1a1a1a"><b style="transform:scaleX(0.8333)"> </b></i><i style="width:29.06px;color:#1a1a1a"><b style="transform:scaleX(0.8333)">:=</b></i><i style="width:14.53px;color:#1a1a1a"><b style="transform:scaleX(0.8333)"> </b></i><i style="width:29.06px;color:#2290cf"><b style="transform:scaleX(0.8333)">AX</b></i><i style="width:14.53px;color:#1a1a1a"><b style="transform:scaleX(0.8333)">[</b></i><i style="width:58.12px;color:#a21c1c"><b style="transform:scaleX(0.8333)">nInx</b></i><i style="width:14.53px;color:#1a1a1a"><b style="transform:scaleX(0.8333)">]</b></i><i style="width:14.53px;color:#2290cf"><b style="transform:scaleX(0.8333)">.</b></i><i style="width:72.65px;color:#2290cf"><b style="transform:scaleX(0.8333)">AsJog</b></i><i style="width:14.53px;color:#2290cf"><b style="transform:scaleX(0.8333)">.</b></i><i style="width:43.59px;color:#2290cf"><b style="transform:scaleX(0.8333)">Pos</b></i><i style="width:14.53px;color:#1a1a1a"><b style="transform:scaleX(0.8333)"> </b></i><i style="width:43.59px;color:#0a0aff"><b style="transform:scaleX(0.8333)">AND</b></i><i style="width:14.53px;color:#1a1a1a"><b style="transform:scaleX(0.8333)"> </b></i><i style="width:101.71px;color:#a21c1c"><b style="transform:scaleX(0.8333)">nJogCon</b></i><i style="width:14.53px;color:#1a1a1a"><b style="transform:scaleX(0.8333)">,</b></i></div>
<div class="ml " style="left:13.5px;top:999.5px;line-height:40px;font-size:29px"><i style="width:116.24px;color:#1a1a1a"><b style="transform:scaleX(0.8333)">        </b></i><i style="width:203.42px;color:#9b2ff2"><b style="transform:scaleX(0.8333)">NegativeEnable</b></i><i style="width:14.53px;color:#1a1a1a"><b style="transform:scaleX(0.8333)"> </b></i><i style="width:29.06px;color:#1a1a1a"><b style="transform:scaleX(0.8333)">:=</b></i><i style="width:14.53px;color:#1a1a1a"><b style="transform:scaleX(0.8333)"> </b></i><i style="width:29.06px;color:#2290cf"><b style="transform:scaleX(0.8333)">AX</b></i><i style="width:14.53px;color:#1a1a1a"><b style="transform:scaleX(0.8333)">[</b></i><i style="width:58.12px;color:#a21c1c"><b style="transform:scaleX(0.8333)">nInx</b></i><i style="width:14.53px;color:#1a1a1a"><b style="transform:scaleX(0.8333)">]</b></i><i style="width:14.53px;color:#2290cf"><b style="transform:scaleX(0.8333)">.</b></i><i style="width:72.65px;color:#2290cf"><b style="transform:scaleX(0.8333)">AsJog</b></i><i style="width:14.53px;color:#2290cf"><b style="transform:scaleX(0.8333)">.</b></i><i style="width:43.59px;color:#2290cf"><b style="transform:scaleX(0.8333)">Neg</b></i><i style="width:14.53px;color:#1a1a1a"><b style="transform:scaleX(0.8333)"> </b></i><i style="width:43.59px;color:#0a0aff"><b style="transform:scaleX(0.8333)">AND</b></i><i style="width:14.53px;color:#1a1a1a"><b style="transform:scaleX(0.8333)"> </b></i><i style="width:101.71px;color:#a21c1c"><b style="transform:scaleX(0.8333)">nJogCon</b></i><i style="width:14.53px;color:#1a1a1a"><b style="transform:scaleX(0.8333)">,</b></i></div>
<div class="ml " style="left:13.5px;top:1032.7px;line-height:40px;font-size:29px"><i style="width:116.24px;color:#1a1a1a"><b style="transform:scaleX(0.8333)">        </b></i><i style="width:116.24px;color:#9b2ff2"><b style="transform:scaleX(0.8333)">Velocity</b></i><i style="width:14.53px;color:#1a1a1a"><b style="transform:scaleX(0.8333)"> </b></i><i style="width:29.06px;color:#1a1a1a"><b style="transform:scaleX(0.8333)">:=</b></i><i style="width:14.53px;color:#1a1a1a"><b style="transform:scaleX(0.8333)"> </b></i><i style="width:29.06px;color:#2290cf"><b style="transform:scaleX(0.8333)">AX</b></i><i style="width:14.53px;color:#1a1a1a"><b style="transform:scaleX(0.8333)">[</b></i><i style="width:58.12px;color:#a21c1c"><b style="transform:scaleX(0.8333)">nInx</b></i><i style="width:14.53px;color:#1a1a1a"><b style="transform:scaleX(0.8333)">]</b></i><i style="width:14.53px;color:#2290cf"><b style="transform:scaleX(0.8333)">.</b></i><i style="width:72.65px;color:#2290cf"><b style="transform:scaleX(0.8333)">AsJog</b></i><i style="width:14.53px;color:#2290cf"><b style="transform:scaleX(0.8333)">.</b></i><i style="width:72.65px;color:#2290cf"><b style="transform:scaleX(0.8333)">Speed</b></i><i style="width:14.53px;color:#1a1a1a"><b style="transform:scaleX(0.8333)">,</b></i></div>
<div class="ml " style="left:13.5px;top:1065.9px;line-height:40px;font-size:29px"><i style="width:116.24px;color:#1a1a1a"><b style="transform:scaleX(0.8333)">        </b></i><i style="width:174.36px;color:#9b2ff2"><b style="transform:scaleX(0.8333)">Acceleration</b></i><i style="width:14.53px;color:#1a1a1a"><b style="transform:scaleX(0.8333)"> </b></i><i style="width:29.06px;color:#1a1a1a"><b style="transform:scaleX(0.8333)">:=</b></i><i style="width:14.53px;color:#1a1a1a"><b style="transform:scaleX(0.8333)"> </b></i><i style="width:29.06px;color:#2290cf"><b style="transform:scaleX(0.8333)">AX</b></i><i style="width:14.53px;color:#1a1a1a"><b style="transform:scaleX(0.8333)">[</b></i><i style="width:58.12px;color:#a21c1c"><b style="transform:scaleX(0.8333)">nInx</b></i><i style="width:14.53px;color:#1a1a1a"><b style="transform:scaleX(0.8333)">]</b></i><i style="width:14.53px;color:#2290cf"><b style="transform:scaleX(0.8333)">.</b></i><i style="width:87.18px;color:#2290cf"><b style="transform:scaleX(0.8333)">AsPara</b></i><i style="width:14.53px;color:#2290cf"><b style="transform:scaleX(0.8333)">.</b></i><i style="width:72.65px;color:#2290cf"><b style="transform:scaleX(0.8333)">Accel</b></i><i style="width:14.53px;color:#1a1a1a"><b style="transform:scaleX(0.8333)">,</b></i></div>
</div>
<div style="position:absolute;left:0;top:152px;width:428px;height:1331px;overflow:hidden">
<div style="position:absolute;left:16px;top:12px;width:1px;height:1400px;background:repeating-linear-gradient(#66768f 0 1px,transparent 1px 2px)"></div>
<div style="position:absolute;left:40px;top:12px;width:1px;height:420px;background:repeating-linear-gradient(#66768f 0 1px,transparent 1px 2px)"></div>
<div style="position:absolute;left:64px;top:32px;width:1px;height:20px;background:repeating-linear-gradient(#66768f 0 1px,transparent 1px 2px)"></div>
<div style="position:absolute;left:88px;top:52px;width:1px;height:200px;background:repeating-linear-gradient(#66768f 0 1px,transparent 1px 2px)"></div>
<div style="position:absolute;left:64px;top:272px;width:1px;height:120px;background:repeating-linear-gradient(#66768f 0 1px,transparent 1px 2px)"></div>
<div style="position:absolute;left:40px;top:552px;width:1px;height:660px;background:repeating-linear-gradient(#66768f 0 1px,transparent 1px 2px)"></div>
<div style="position:absolute;left:64px;top:572px;width:1px;height:560px;background:repeating-linear-gradient(#66768f 0 1px,transparent 1px 2px)"></div>
<div style="position:absolute;left:40px;top:1232px;width:1px;height:180px;background:repeating-linear-gradient(#66768f 0 1px,transparent 1px 2px)"></div>
<div style="position:absolute;left:17px;top:12px;width:11px;height:1px;background:repeating-linear-gradient(90deg,#66768f 0 1px,transparent 1px 2px)"></div>
<div style="position:absolute;left:40px;top:32px;width:12px;height:1px;background:repeating-linear-gradient(90deg,#66768f 0 1px,transparent 1px 2px)"></div>
<div style="position:absolute;left:64px;top:52px;width:12px;height:1px;background:repeating-linear-gradient(90deg,#66768f 0 1px,transparent 1px 2px)"></div>
<div style="position:absolute;left:88px;top:72px;width:12px;height:1px;background:repeating-linear-gradient(90deg,#66768f 0 1px,transparent 1px 2px)"></div>
<div style="position:absolute;left:88px;top:92px;width:12px;height:1px;background:repeating-linear-gradient(90deg,#66768f 0 1px,transparent 1px 2px)"></div>
<div style="position:absolute;left:88px;top:112px;width:12px;height:1px;background:repeating-linear-gradient(90deg,#66768f 0 1px,transparent 1px 2px)"></div>
<div style="position:absolute;left:88px;top:132px;width:12px;height:1px;background:repeating-linear-gradient(90deg,#66768f 0 1px,transparent 1px 2px)"></div>
<div style="position:absolute;left:88px;top:152px;width:12px;height:1px;background:repeating-linear-gradient(90deg,#66768f 0 1px,transparent 1px 2px)"></div>
<div style="position:absolute;left:88px;top:172px;width:12px;height:1px;background:repeating-linear-gradient(90deg,#66768f 0 1px,transparent 1px 2px)"></div>
<div style="position:absolute;left:88px;top:192px;width:12px;height:1px;background:repeating-linear-gradient(90deg,#66768f 0 1px,transparent 1px 2px)"></div>
<div style="position:absolute;left:88px;top:212px;width:12px;height:1px;background:repeating-linear-gradient(90deg,#66768f 0 1px,transparent 1px 2px)"></div>
<div style="position:absolute;left:88px;top:232px;width:12px;height:1px;background:repeating-linear-gradient(90deg,#66768f 0 1px,transparent 1px 2px)"></div>
<div style="position:absolute;left:88px;top:252px;width:12px;height:1px;background:repeating-linear-gradient(90deg,#66768f 0 1px,transparent 1px 2px)"></div>
<div style="position:absolute;left:40px;top:272px;width:12px;height:1px;background:repeating-linear-gradient(90deg,#66768f 0 1px,transparent 1px 2px)"></div>
<div style="position:absolute;left:64px;top:292px;width:12px;height:1px;background:repeating-linear-gradient(90deg,#66768f 0 1px,transparent 1px 2px)"></div>
<div style="position:absolute;left:64px;top:312px;width:12px;height:1px;background:repeating-linear-gradient(90deg,#66768f 0 1px,transparent 1px 2px)"></div>
<div style="position:absolute;left:64px;top:332px;width:12px;height:1px;background:repeating-linear-gradient(90deg,#66768f 0 1px,transparent 1px 2px)"></div>
<div style="position:absolute;left:64px;top:352px;width:12px;height:1px;background:repeating-linear-gradient(90deg,#66768f 0 1px,transparent 1px 2px)"></div>
<div style="position:absolute;left:64px;top:372px;width:12px;height:1px;background:repeating-linear-gradient(90deg,#66768f 0 1px,transparent 1px 2px)"></div>
<div style="position:absolute;left:64px;top:392px;width:12px;height:1px;background:repeating-linear-gradient(90deg,#66768f 0 1px,transparent 1px 2px)"></div>
<div style="position:absolute;left:40px;top:412px;width:12px;height:1px;background:repeating-linear-gradient(90deg,#66768f 0 1px,transparent 1px 2px)"></div>
<div style="position:absolute;left:40px;top:432px;width:12px;height:1px;background:repeating-linear-gradient(90deg,#66768f 0 1px,transparent 1px 2px)"></div>
<div style="position:absolute;left:17px;top:452px;width:11px;height:1px;background:repeating-linear-gradient(90deg,#66768f 0 1px,transparent 1px 2px)"></div>
<div style="position:absolute;left:17px;top:472px;width:11px;height:1px;background:repeating-linear-gradient(90deg,#66768f 0 1px,transparent 1px 2px)"></div>
<div style="position:absolute;left:17px;top:492px;width:11px;height:1px;background:repeating-linear-gradient(90deg,#66768f 0 1px,transparent 1px 2px)"></div>
<div style="position:absolute;left:17px;top:512px;width:11px;height:1px;background:repeating-linear-gradient(90deg,#66768f 0 1px,transparent 1px 2px)"></div>
<div style="position:absolute;left:17px;top:532px;width:11px;height:1px;background:repeating-linear-gradient(90deg,#66768f 0 1px,transparent 1px 2px)"></div>
<div style="position:absolute;left:17px;top:552px;width:11px;height:1px;background:repeating-linear-gradient(90deg,#66768f 0 1px,transparent 1px 2px)"></div>
<div style="position:absolute;left:40px;top:572px;width:12px;height:1px;background:repeating-linear-gradient(90deg,#66768f 0 1px,transparent 1px 2px)"></div>
<div style="position:absolute;left:64px;top:592px;width:12px;height:1px;background:repeating-linear-gradient(90deg,#66768f 0 1px,transparent 1px 2px)"></div>
<div style="position:absolute;left:64px;top:612px;width:12px;height:1px;background:repeating-linear-gradient(90deg,#66768f 0 1px,transparent 1px 2px)"></div>
<div style="position:absolute;left:64px;top:632px;width:12px;height:1px;background:repeating-linear-gradient(90deg,#66768f 0 1px,transparent 1px 2px)"></div>
<div style="position:absolute;left:64px;top:652px;width:12px;height:1px;background:repeating-linear-gradient(90deg,#66768f 0 1px,transparent 1px 2px)"></div>
<div style="position:absolute;left:64px;top:672px;width:12px;height:1px;background:repeating-linear-gradient(90deg,#66768f 0 1px,transparent 1px 2px)"></div>
<div style="position:absolute;left:64px;top:692px;width:12px;height:1px;background:repeating-linear-gradient(90deg,#66768f 0 1px,transparent 1px 2px)"></div>
<div style="position:absolute;left:64px;top:712px;width:12px;height:1px;background:repeating-linear-gradient(90deg,#66768f 0 1px,transparent 1px 2px)"></div>
<div style="position:absolute;left:64px;top:732px;width:12px;height:1px;background:repeating-linear-gradient(90deg,#66768f 0 1px,transparent 1px 2px)"></div>
<div style="position:absolute;left:64px;top:752px;width:12px;height:1px;background:repeating-linear-gradient(90deg,#66768f 0 1px,transparent 1px 2px)"></div>
<div style="position:absolute;left:64px;top:772px;width:12px;height:1px;background:repeating-linear-gradient(90deg,#66768f 0 1px,transparent 1px 2px)"></div>
<div style="position:absolute;left:64px;top:792px;width:12px;height:1px;background:repeating-linear-gradient(90deg,#66768f 0 1px,transparent 1px 2px)"></div>
<div style="position:absolute;left:64px;top:812px;width:12px;height:1px;background:repeating-linear-gradient(90deg,#66768f 0 1px,transparent 1px 2px)"></div>
<div style="position:absolute;left:64px;top:832px;width:12px;height:1px;background:repeating-linear-gradient(90deg,#66768f 0 1px,transparent 1px 2px)"></div>
<div style="position:absolute;left:64px;top:852px;width:12px;height:1px;background:repeating-linear-gradient(90deg,#66768f 0 1px,transparent 1px 2px)"></div>
<div style="position:absolute;left:64px;top:872px;width:12px;height:1px;background:repeating-linear-gradient(90deg,#66768f 0 1px,transparent 1px 2px)"></div>
<div style="position:absolute;left:64px;top:892px;width:12px;height:1px;background:repeating-linear-gradient(90deg,#66768f 0 1px,transparent 1px 2px)"></div>
<div style="position:absolute;left:64px;top:912px;width:12px;height:1px;background:repeating-linear-gradient(90deg,#66768f 0 1px,transparent 1px 2px)"></div>
<div style="position:absolute;left:64px;top:932px;width:12px;height:1px;background:repeating-linear-gradient(90deg,#66768f 0 1px,transparent 1px 2px)"></div>
<div style="position:absolute;left:64px;top:952px;width:12px;height:1px;background:repeating-linear-gradient(90deg,#66768f 0 1px,transparent 1px 2px)"></div>
<div style="position:absolute;left:64px;top:972px;width:12px;height:1px;background:repeating-linear-gradient(90deg,#66768f 0 1px,transparent 1px 2px)"></div>
<div style="position:absolute;left:64px;top:992px;width:12px;height:1px;background:repeating-linear-gradient(90deg,#66768f 0 1px,transparent 1px 2px)"></div>
<div style="position:absolute;left:64px;top:1012px;width:12px;height:1px;background:repeating-linear-gradient(90deg,#66768f 0 1px,transparent 1px 2px)"></div>
<div style="position:absolute;left:64px;top:1032px;width:12px;height:1px;background:repeating-linear-gradient(90deg,#66768f 0 1px,transparent 1px 2px)"></div>
<div style="position:absolute;left:64px;top:1052px;width:12px;height:1px;background:repeating-linear-gradient(90deg,#66768f 0 1px,transparent 1px 2px)"></div>
<div style="position:absolute;left:64px;top:1072px;width:12px;height:1px;background:repeating-linear-gradient(90deg,#66768f 0 1px,transparent 1px 2px)"></div>
<div style="position:absolute;left:64px;top:1092px;width:12px;height:1px;background:repeating-linear-gradient(90deg,#66768f 0 1px,transparent 1px 2px)"></div>
<div style="position:absolute;left:64px;top:1112px;width:12px;height:1px;background:repeating-linear-gradient(90deg,#66768f 0 1px,transparent 1px 2px)"></div>
<div style="position:absolute;left:64px;top:1132px;width:12px;height:1px;background:repeating-linear-gradient(90deg,#66768f 0 1px,transparent 1px 2px)"></div>
<div style="position:absolute;left:40px;top:1152px;width:12px;height:1px;background:repeating-linear-gradient(90deg,#66768f 0 1px,transparent 1px 2px)"></div>
<div style="position:absolute;left:40px;top:1172px;width:12px;height:1px;background:repeating-linear-gradient(90deg,#66768f 0 1px,transparent 1px 2px)"></div>
<div style="position:absolute;left:40px;top:1192px;width:12px;height:1px;background:repeating-linear-gradient(90deg,#66768f 0 1px,transparent 1px 2px)"></div>
<div style="position:absolute;left:40px;top:1212px;width:12px;height:1px;background:repeating-linear-gradient(90deg,#66768f 0 1px,transparent 1px 2px)"></div>
<div style="position:absolute;left:17px;top:1232px;width:11px;height:1px;background:repeating-linear-gradient(90deg,#66768f 0 1px,transparent 1px 2px)"></div>
<div style="position:absolute;left:40px;top:1252px;width:12px;height:1px;background:repeating-linear-gradient(90deg,#66768f 0 1px,transparent 1px 2px)"></div>
<div style="position:absolute;left:40px;top:1272px;width:12px;height:1px;background:repeating-linear-gradient(90deg,#66768f 0 1px,transparent 1px 2px)"></div>
<div style="position:absolute;left:40px;top:1292px;width:12px;height:1px;background:repeating-linear-gradient(90deg,#66768f 0 1px,transparent 1px 2px)"></div>
<div style="position:absolute;left:40px;top:1312px;width:12px;height:1px;background:repeating-linear-gradient(90deg,#66768f 0 1px,transparent 1px 2px)"></div>
<div style="position:absolute;left:40px;top:1332px;width:12px;height:1px;background:repeating-linear-gradient(90deg,#66768f 0 1px,transparent 1px 2px)"></div>
<div style="position:absolute;left:10px;top:7px;width:11px;height:11px;background:linear-gradient(#fff,#d8d8d8);border:1px solid #9a9a9a"></div>
<div style="position:absolute;left:13px;top:12px;width:5px;height:1px;background:#3b4f9b"></div>
<div class="ml " style="left:55.0px;top:3.0px;line-height:20px;font-size:16px"><i class="cj" style="width:60.00px;color:#fff;font-size:15px">单元配置</i></div>
<div style="position:absolute;left:34px;top:27px;width:11px;height:11px;background:linear-gradient(#fff,#d8d8d8);border:1px solid #9a9a9a"></div>
<div style="position:absolute;left:37px;top:32px;width:5px;height:1px;background:#3b4f9b"></div>
<div class="ml " style="left:80.0px;top:23.0px;line-height:20px;font-size:16px"><i style="width:90.00px;color:#fff"><b style="transform:scaleX(0.7800)">[0]  KV-8000</b></i></div>
<div style="position:absolute;left:58px;top:47px;width:11px;height:11px;background:linear-gradient(#fff,#d8d8d8);border:1px solid #9a9a9a"></div>
<div style="position:absolute;left:61px;top:52px;width:5px;height:1px;background:#3b4f9b"></div>
<div class="ml " style="left:102.0px;top:43.0px;line-height:20px;font-size:16px"><i style="width:217.50px;color:#fff"><b style="transform:scaleX(0.7800)">EtherNet/IP   R30000  DM10000</b></i></div>
<div class="ml " style="left:127.0px;top:63.0px;line-height:20px;font-size:16px"><i style="width:97.50px;color:#fff"><b style="transform:scaleX(0.7800)">[1]  BG1_EICT</b></i></div>
<div class="ml " style="left:127.0px;top:83.0px;line-height:20px;font-size:16px"><i style="width:97.50px;color:#fff"><b style="transform:scaleX(0.7800)">[2]  BG1_EICT</b></i></div>
<div class="ml " style="left:127.0px;top:103.0px;line-height:20px;font-size:16px"><i style="width:97.50px;color:#fff"><b style="transform:scaleX(0.7800)">[3]  BG1_EICT</b></i></div>
<div class="ml " style="left:127.0px;top:123.0px;line-height:20px;font-size:16px"><i style="width:97.50px;color:#fff"><b style="transform:scaleX(0.7800)">[4]  BG1_EICT</b></i></div>
<div class="ml " style="left:127.0px;top:143.0px;line-height:20px;font-size:16px"><i style="width:97.50px;color:#fff"><b style="transform:scaleX(0.7800)">[5]  BG1_EICT</b></i></div>
<div class="ml " style="left:127.0px;top:163.0px;line-height:20px;font-size:16px"><i style="width:97.50px;color:#fff"><b style="transform:scaleX(0.7800)">[6]  BG1_EICT</b></i></div>
<div class="ml " style="left:127.0px;top:183.0px;line-height:20px;font-size:16px"><i style="width:97.50px;color:#fff"><b style="transform:scaleX(0.7800)">[7]  BG1_EICT</b></i></div>
<div class="ml " style="left:127.0px;top:203.0px;line-height:20px;font-size:16px"><i style="width:97.50px;color:#fff"><b style="transform:scaleX(0.7800)">[8]  BG1_EICT</b></i></div>
<div class="ml " style="left:127.0px;top:223.0px;line-height:20px;font-size:16px"><i style="width:97.50px;color:#fff"><b style="transform:scaleX(0.7800)">[9]  BG1_EICT</b></i></div>
<div style="position:absolute;left:82px;top:247px;width:11px;height:11px;background:linear-gradient(#fff,#d8d8d8);border:1px solid #9a9a9a"></div>
<div style="position:absolute;left:85px;top:252px;width:5px;height:1px;background:#3b4f9b"></div>
<div style="position:absolute;left:87px;top:250px;width:1px;height:5px;background:#3b4f9b"></div>
<div class="ml " style="left:127.0px;top:243.0px;line-height:20px;font-size:16px"><i style="width:90.00px;color:#fff"><b style="transform:scaleX(0.7800)">[10-0]DL-EP1</b></i></div>
<div style="position:absolute;left:34px;top:267px;width:11px;height:11px;background:linear-gradient(#fff,#d8d8d8);border:1px solid #9a9a9a"></div>
<div style="position:absolute;left:37px;top:272px;width:5px;height:1px;background:#3b4f9b"></div>
<div class="ml " style="left:80.0px;top:263.0px;line-height:20px;font-size:16px"><i style="width:240.00px;color:#fff"><b style="transform:scaleX(0.7800)">[1]  KV-XH32EC   R38000  DM10300</b></i></div>
<div class="ml " style="left:102.0px;top:283.0px;line-height:20px;font-size:16px"><i class="cj" style="width:75.00px;color:#fff;font-size:15px">轴构成设定</i></div>
<div class="ml " style="left:102.0px;top:303.0px;line-height:20px;font-size:16px"><i class="cj" style="width:90.00px;color:#fff;font-size:15px">单元通用设定</i></div>
<div class="ml " style="left:102.0px;top:323.0px;line-height:20px;font-size:16px"><i class="cj" style="width:75.00px;color:#fff;font-size:15px">轴控制设定</i></div>
<div class="ml " style="left:102.0px;top:343.0px;line-height:20px;font-size:16px"><i class="cj" style="width:45.00px;color:#fff;font-size:15px">点参数</i></div>
<div style="position:absolute;left:58px;top:367px;width:11px;height:11px;background:linear-gradient(#fff,#d8d8d8);border:1px solid #9a9a9a"></div>
<div style="position:absolute;left:61px;top:372px;width:5px;height:1px;background:#3b4f9b"></div>
<div style="position:absolute;left:63px;top:370px;width:1px;height:5px;background:#3b4f9b"></div>
<div class="ml " style="left:102.0px;top:363.0px;line-height:20px;font-size:16px"><i class="cj" style="width:90.00px;color:#fff;font-size:15px">同步控制设定</i></div>
<div class="ml " style="left:102.0px;top:383.0px;line-height:20px;font-size:16px"><i class="cj" style="width:60.00px;color:#fff;font-size:15px">选项设定</i></div>
<div class="ml " style="left:80.0px;top:403.0px;line-height:20px;font-size:16px"><i style="width:225.00px;color:#fff"><b style="transform:scaleX(0.7800)">[2]  KV-C32XTD   R64000/R64200</b></i></div>
<div style="position:absolute;left:311px;top:412px;width:38px;height:1px;background:#fff"></div>
<div class="ml " style="left:79.0px;top:423.0px;line-height:20px;font-size:16px"><i class="cj" style="width:90.00px;color:#fff;font-size:15px">切换单元配置</i></div>
<div class="ml " style="left:55.0px;top:443.0px;line-height:20px;font-size:16px"><i class="cj" style="width:75.00px;color:#fff;font-size:15px">软元件注释</i></div>
<div class="ml " style="left:55.0px;top:463.0px;line-height:20px;font-size:16px"><i class="cj" style="width:30.00px;color:#fff;font-size:15px">变量</i></div>
<div style="position:absolute;left:10px;top:487px;width:11px;height:11px;background:linear-gradient(#fff,#d8d8d8);border:1px solid #9a9a9a"></div>
<div style="position:absolute;left:13px;top:492px;width:5px;height:1px;background:#3b4f9b"></div>
<div style="position:absolute;left:15px;top:490px;width:1px;height:5px;background:#3b4f9b"></div>
<div class="ml " style="left:55.0px;top:483.0px;line-height:20px;font-size:16px"><i class="cj" style="width:45.00px;color:#fff;font-size:15px">结构体</i></div>
<div class="ml " style="left:55.0px;top:503.0px;line-height:20px;font-size:16px"><i class="cj" style="width:90.00px;color:#fff;font-size:15px">运转记录设定</i><i style="width:7.50px;color:#fff"><b style="transform:scaleX(0.7800)"> </b></i><i class="cj" style="width:45.00px;color:#fff;font-size:15px">未设定</i></div>
<svg style="left:202px;top:503px" width="18" height="18"><circle cx="9" cy="9" r="8.5" fill="#f0b428"/><rect x="8" y="3.5" width="2.2" height="7" fill="#fff"/><rect x="8" y="12" width="2.2" height="2.2" fill="#fff"/></svg>
<div class="ml " style="left:55.0px;top:523.0px;line-height:20px;font-size:16px"><i style="width:30.00px;color:#fff"><b style="transform:scaleX(0.7800)">CPU </b></i><i class="cj" style="width:60.00px;color:#fff;font-size:15px">系统设定</i></div>
<div style="position:absolute;left:10px;top:547px;width:11px;height:11px;background:linear-gradient(#fff,#d8d8d8);border:1px solid #9a9a9a"></div>
<div style="position:absolute;left:13px;top:552px;width:5px;height:1px;background:#3b4f9b"></div>
<div class="ml " style="left:55.0px;top:543.0px;line-height:20px;font-size:16px"><i class="cj" style="width:30.00px;color:#fff;font-size:15px">程序</i><i style="width:82.50px;color:#fff"><b style="transform:scaleX(0.7800)">: 0_program</b></i></div>
<div style="position:absolute;left:34px;top:567px;width:11px;height:11px;background:linear-gradient(#fff,#d8d8d8);border:1px solid #9a9a9a"></div>
<div style="position:absolute;left:37px;top:572px;width:5px;height:1px;background:#3b4f9b"></div>
<div class="ml " style="left:79.0px;top:563.0px;line-height:20px;font-size:16px"><i class="cj" style="width:135.00px;color:#fff;font-size:15px">每次扫描执行型模块</i></div>
<div style="position:absolute;left:58px;top:587px;width:11px;height:11px;background:linear-gradient(#fff,#d8d8d8);border:1px solid #9a9a9a"></div>
<div style="position:absolute;left:61px;top:592px;width:5px;height:1px;background:#3b4f9b"></div>
<div style="position:absolute;left:63px;top:590px;width:1px;height:5px;background:#3b4f9b"></div>
<div class="ml " style="left:102.0px;top:583.0px;line-height:20px;font-size:16px"><i style="width:45.00px;color:#fff"><b style="transform:scaleX(0.7800)">ComApi</b></i></div>
<div style="position:absolute;left:58px;top:607px;width:11px;height:11px;background:linear-gradient(#fff,#d8d8d8);border:1px solid #9a9a9a"></div>
<div style="position:absolute;left:61px;top:612px;width:5px;height:1px;background:#3b4f9b"></div>
<div style="position:absolute;left:63px;top:610px;width:1px;height:5px;background:#3b4f9b"></div>
<div class="ml " style="left:102.0px;top:603.0px;line-height:20px;font-size:16px"><i style="width:22.50px;color:#fff"><b style="transform:scaleX(0.7800)">HMI</b></i></div>
<div style="position:absolute;left:58px;top:627px;width:11px;height:11px;background:linear-gradient(#fff,#d8d8d8);border:1px solid #9a9a9a"></div>
<div style="position:absolute;left:61px;top:632px;width:5px;height:1px;background:#3b4f9b"></div>
<div style="position:absolute;left:63px;top:630px;width:1px;height:5px;background:#3b4f9b"></div>
<div class="ml " style="left:102.0px;top:623.0px;line-height:20px;font-size:16px"><i style="width:30.00px;color:#fff"><b style="transform:scaleX(0.7800)">Main</b></i></div>
<div style="position:absolute;left:58px;top:647px;width:11px;height:11px;background:linear-gradient(#fff,#d8d8d8);border:1px solid #9a9a9a"></div>
<div style="position:absolute;left:61px;top:652px;width:5px;height:1px;background:#3b4f9b"></div>
<div style="position:absolute;left:63px;top:650px;width:1px;height:5px;background:#3b4f9b"></div>
<div class="ml " style="left:102.0px;top:643.0px;line-height:20px;font-size:16px"><i style="width:30.00px;color:#fff"><b style="transform:scaleX(0.7800)">Home</b></i></div>
<div style="position:absolute;left:58px;top:667px;width:11px;height:11px;background:linear-gradient(#fff,#d8d8d8);border:1px solid #9a9a9a"></div>
<div style="position:absolute;left:61px;top:672px;width:5px;height:1px;background:#3b4f9b"></div>
<div style="position:absolute;left:63px;top:670px;width:1px;height:5px;background:#3b4f9b"></div>
<div class="ml " style="left:102.0px;top:663.0px;line-height:20px;font-size:16px"><i style="width:60.00px;color:#fff"><b style="transform:scaleX(0.7800)">ComPCApi</b></i></div>
<div style="position:absolute;left:58px;top:687px;width:11px;height:11px;background:linear-gradient(#fff,#d8d8d8);border:1px solid #9a9a9a"></div>
<div style="position:absolute;left:61px;top:692px;width:5px;height:1px;background:#3b4f9b"></div>
<div style="position:absolute;left:63px;top:690px;width:1px;height:5px;background:#3b4f9b"></div>
<div class="ml " style="left:102.0px;top:683.0px;line-height:20px;font-size:16px"><i style="width:30.00px;color:#fff"><b style="transform:scaleX(0.7800)">Proc</b></i><i class="cj" style="width:75.00px;color:#fff;font-size:15px">前升降工位</i></div>
<div style="position:absolute;left:58px;top:707px;width:11px;height:11px;background:linear-gradient(#fff,#d8d8d8);border:1px solid #9a9a9a"></div>
<div style="position:absolute;left:61px;top:712px;width:5px;height:1px;background:#3b4f9b"></div>
<div style="position:absolute;left:63px;top:710px;width:1px;height:5px;background:#3b4f9b"></div>
<div class="ml " style="left:102.0px;top:703.0px;line-height:20px;font-size:16px"><i style="width:52.50px;color:#fff"><b style="transform:scaleX(0.7800)">ProcPCB</b></i><i class="cj" style="width:30.00px;color:#fff;font-size:15px">组装</i></div>
<div style="position:absolute;left:58px;top:727px;width:11px;height:11px;background:linear-gradient(#fff,#d8d8d8);border:1px solid #9a9a9a"></div>
<div style="position:absolute;left:61px;top:732px;width:5px;height:1px;background:#3b4f9b"></div>
<div style="position:absolute;left:63px;top:730px;width:1px;height:5px;background:#3b4f9b"></div>
<div class="ml " style="left:102.0px;top:723.0px;line-height:20px;font-size:16px"><i style="width:52.50px;color:#fff"><b style="transform:scaleX(0.7800)">ProcPCB</b></i><i class="cj" style="width:45.00px;color:#fff;font-size:15px">打螺丝</i></div>
<div style="position:absolute;left:58px;top:747px;width:11px;height:11px;background:linear-gradient(#fff,#d8d8d8);border:1px solid #9a9a9a"></div>
<div style="position:absolute;left:61px;top:752px;width:5px;height:1px;background:#3b4f9b"></div>
<div style="position:absolute;left:63px;top:750px;width:1px;height:5px;background:#3b4f9b"></div>
<div class="ml " style="left:102.0px;top:743.0px;line-height:20px;font-size:16px"><i style="width:30.00px;color:#fff"><b style="transform:scaleX(0.7800)">Proc</b></i><i class="cj" style="width:60.00px;color:#fff;font-size:15px">排线检测</i></div>
<div style="position:absolute;left:58px;top:767px;width:11px;height:11px;background:linear-gradient(#fff,#d8d8d8);border:1px solid #9a9a9a"></div>
<div style="position:absolute;left:61px;top:772px;width:5px;height:1px;background:#3b4f9b"></div>
<div style="position:absolute;left:63px;top:770px;width:1px;height:5px;background:#3b4f9b"></div>
<div class="ml " style="left:102.0px;top:763.0px;line-height:20px;font-size:16px"><i style="width:30.00px;color:#fff"><b style="transform:scaleX(0.7800)">Proc</b></i><i class="cj" style="width:60.00px;color:#fff;font-size:15px">自动压合</i></div>
<div style="position:absolute;left:58px;top:787px;width:11px;height:11px;background:linear-gradient(#fff,#d8d8d8);border:1px solid #9a9a9a"></div>
<div style="position:absolute;left:61px;top:792px;width:5px;height:1px;background:#3b4f9b"></div>
<div style="position:absolute;left:63px;top:790px;width:1px;height:5px;background:#3b4f9b"></div>
<div class="ml " style="left:102.0px;top:783.0px;line-height:20px;font-size:16px"><i style="width:30.00px;color:#fff"><b style="transform:scaleX(0.7800)">Proc</b></i><i class="cj" style="width:60.00px;color:#fff;font-size:15px">后盖组装</i></div>
<div style="position:absolute;left:58px;top:807px;width:11px;height:11px;background:linear-gradient(#fff,#d8d8d8);border:1px solid #9a9a9a"></div>
<div style="position:absolute;left:61px;top:812px;width:5px;height:1px;background:#3b4f9b"></div>
<div style="position:absolute;left:63px;top:810px;width:1px;height:5px;background:#3b4f9b"></div>
<div class="ml " style="left:102.0px;top:803.0px;line-height:20px;font-size:16px"><i style="width:30.00px;color:#fff"><b style="transform:scaleX(0.7800)">Proc</b></i><i class="cj" style="width:75.00px;color:#fff;font-size:15px">后盖打螺丝</i></div>
<div style="position:absolute;left:58px;top:827px;width:11px;height:11px;background:linear-gradient(#fff,#d8d8d8);border:1px solid #9a9a9a"></div>
<div style="position:absolute;left:61px;top:832px;width:5px;height:1px;background:#3b4f9b"></div>
<div style="position:absolute;left:63px;top:830px;width:1px;height:5px;background:#3b4f9b"></div>
<div class="ml " style="left:102.0px;top:823.0px;line-height:20px;font-size:16px"><i style="width:30.00px;color:#fff"><b style="transform:scaleX(0.7800)">Proc</b></i><i class="cj" style="width:60.00px;color:#fff;font-size:15px">自动贴标</i></div>
<div style="position:absolute;left:58px;top:847px;width:11px;height:11px;background:linear-gradient(#fff,#d8d8d8);border:1px solid #9a9a9a"></div>
<div style="position:absolute;left:61px;top:852px;width:5px;height:1px;background:#3b4f9b"></div>
<div style="position:absolute;left:63px;top:850px;width:1px;height:5px;background:#3b4f9b"></div>
<div class="ml " style="left:102.0px;top:843.0px;line-height:20px;font-size:16px"><i style="width:30.00px;color:#fff"><b style="transform:scaleX(0.7800)">Proc</b></i><i class="cj" style="width:75.00px;color:#fff;font-size:15px">后升降工位</i></div>
<div style="position:absolute;left:58px;top:867px;width:11px;height:11px;background:linear-gradient(#fff,#d8d8d8);border:1px solid #9a9a9a"></div>
<div style="position:absolute;left:61px;top:872px;width:5px;height:1px;background:#3b4f9b"></div>
<div style="position:absolute;left:63px;top:870px;width:1px;height:5px;background:#3b4f9b"></div>
<div class="ml " style="left:102.0px;top:863.0px;line-height:20px;font-size:16px"><i style="width:30.00px;color:#fff"><b style="transform:scaleX(0.7800)">Proc</b></i><i class="cj" style="width:30.00px;color:#fff;font-size:15px">下料</i></div>
<div style="position:absolute;left:58px;top:887px;width:11px;height:11px;background:linear-gradient(#fff,#d8d8d8);border:1px solid #9a9a9a"></div>
<div style="position:absolute;left:61px;top:892px;width:5px;height:1px;background:#3b4f9b"></div>
<div style="position:absolute;left:63px;top:890px;width:1px;height:5px;background:#3b4f9b"></div>
<div class="ml " style="left:102.0px;top:883.0px;line-height:20px;font-size:16px"><i style="width:52.50px;color:#fff"><b style="transform:scaleX(0.7800)">UnitCmd</b></i><i class="cj" style="width:75.00px;color:#fff;font-size:15px">前升降工位</i></div>
<div style="position:absolute;left:58px;top:907px;width:11px;height:11px;background:linear-gradient(#fff,#d8d8d8);border:1px solid #9a9a9a"></div>
<div style="position:absolute;left:61px;top:912px;width:5px;height:1px;background:#3b4f9b"></div>
<div style="position:absolute;left:63px;top:910px;width:1px;height:5px;background:#3b4f9b"></div>
<div class="ml " style="left:102.0px;top:903.0px;line-height:20px;font-size:16px"><i style="width:75.00px;color:#fff"><b style="transform:scaleX(0.7800)">UnitCmdPCB</b></i><i class="cj" style="width:30.00px;color:#fff;font-size:15px">组装</i></div>
<div style="position:absolute;left:58px;top:927px;width:11px;height:11px;background:linear-gradient(#fff,#d8d8d8);border:1px solid #9a9a9a"></div>
<div style="position:absolute;left:61px;top:932px;width:5px;height:1px;background:#3b4f9b"></div>
<div style="position:absolute;left:63px;top:930px;width:1px;height:5px;background:#3b4f9b"></div>
<div class="ml " style="left:102.0px;top:923.0px;line-height:20px;font-size:16px"><i style="width:75.00px;color:#fff"><b style="transform:scaleX(0.7800)">UnitCmdPCB</b></i><i class="cj" style="width:45.00px;color:#fff;font-size:15px">打螺丝</i></div>
<div style="position:absolute;left:58px;top:947px;width:11px;height:11px;background:linear-gradient(#fff,#d8d8d8);border:1px solid #9a9a9a"></div>
<div style="position:absolute;left:61px;top:952px;width:5px;height:1px;background:#3b4f9b"></div>
<div style="position:absolute;left:63px;top:950px;width:1px;height:5px;background:#3b4f9b"></div>
<div class="ml " style="left:102.0px;top:943.0px;line-height:20px;font-size:16px"><i style="width:52.50px;color:#fff"><b style="transform:scaleX(0.7800)">UnitCmd</b></i><i class="cj" style="width:60.00px;color:#fff;font-size:15px">排线检测</i></div>
<div style="position:absolute;left:58px;top:967px;width:11px;height:11px;background:linear-gradient(#fff,#d8d8d8);border:1px solid #9a9a9a"></div>
<div style="position:absolute;left:61px;top:972px;width:5px;height:1px;background:#3b4f9b"></div>
<div style="position:absolute;left:63px;top:970px;width:1px;height:5px;background:#3b4f9b"></div>
<div class="ml " style="left:102.0px;top:963.0px;line-height:20px;font-size:16px"><i style="width:52.50px;color:#fff"><b style="transform:scaleX(0.7800)">UnitCmd</b></i><i class="cj" style="width:60.00px;color:#fff;font-size:15px">自动压合</i></div>
<div style="position:absolute;left:58px;top:987px;width:11px;height:11px;background:linear-gradient(#fff,#d8d8d8);border:1px solid #9a9a9a"></div>
<div style="position:absolute;left:61px;top:992px;width:5px;height:1px;background:#3b4f9b"></div>
<div style="position:absolute;left:63px;top:990px;width:1px;height:5px;background:#3b4f9b"></div>
<div class="ml " style="left:102.0px;top:983.0px;line-height:20px;font-size:16px"><i style="width:52.50px;color:#fff"><b style="transform:scaleX(0.7800)">UnitCmd</b></i><i class="cj" style="width:60.00px;color:#fff;font-size:15px">后盖组装</i></div>
<div style="position:absolute;left:58px;top:1007px;width:11px;height:11px;background:linear-gradient(#fff,#d8d8d8);border:1px solid #9a9a9a"></div>
<div style="position:absolute;left:61px;top:1012px;width:5px;height:1px;background:#3b4f9b"></div>
<div style="position:absolute;left:63px;top:1010px;width:1px;height:5px;background:#3b4f9b"></div>
<div class="ml " style="left:102.0px;top:1003.0px;line-height:20px;font-size:16px"><i style="width:52.50px;color:#fff"><b style="transform:scaleX(0.7800)">UnitCmd</b></i><i class="cj" style="width:75.00px;color:#fff;font-size:15px">后盖打螺丝</i></div>
<div style="position:absolute;left:58px;top:1027px;width:11px;height:11px;background:linear-gradient(#fff,#d8d8d8);border:1px solid #9a9a9a"></div>
<div style="position:absolute;left:61px;top:1032px;width:5px;height:1px;background:#3b4f9b"></div>
<div style="position:absolute;left:63px;top:1030px;width:1px;height:5px;background:#3b4f9b"></div>
<div class="ml " style="left:102.0px;top:1023.0px;line-height:20px;font-size:16px"><i style="width:52.50px;color:#fff"><b style="transform:scaleX(0.7800)">UnitCmd</b></i><i class="cj" style="width:60.00px;color:#fff;font-size:15px">自动贴标</i></div>
<div style="position:absolute;left:58px;top:1047px;width:11px;height:11px;background:linear-gradient(#fff,#d8d8d8);border:1px solid #9a9a9a"></div>
<div style="position:absolute;left:61px;top:1052px;width:5px;height:1px;background:#3b4f9b"></div>
<div style="position:absolute;left:63px;top:1050px;width:1px;height:5px;background:#3b4f9b"></div>
<div class="ml " style="left:102.0px;top:1043.0px;line-height:20px;font-size:16px"><i style="width:52.50px;color:#fff"><b style="transform:scaleX(0.7800)">UnitCmd</b></i><i class="cj" style="width:75.00px;color:#fff;font-size:15px">后升降工位</i></div>
<div style="position:absolute;left:58px;top:1067px;width:11px;height:11px;background:linear-gradient(#fff,#d8d8d8);border:1px solid #9a9a9a"></div>
<div style="position:absolute;left:61px;top:1072px;width:5px;height:1px;background:#3b4f9b"></div>
<div style="position:absolute;left:63px;top:1070px;width:1px;height:5px;background:#3b4f9b"></div>
<div class="ml " style="left:102.0px;top:1063.0px;line-height:20px;font-size:16px"><i style="width:52.50px;color:#fff"><b style="transform:scaleX(0.7800)">UnitCmd</b></i><i class="cj" style="width:30.00px;color:#fff;font-size:15px">下料</i></div>
<div style="position:absolute;left:58px;top:1087px;width:11px;height:11px;background:linear-gradient(#fff,#d8d8d8);border:1px solid #9a9a9a"></div>
<div style="position:absolute;left:61px;top:1092px;width:5px;height:1px;background:#3b4f9b"></div>
<div style="position:absolute;left:63px;top:1090px;width:1px;height:5px;background:#3b4f9b"></div>
<div style="position:absolute;left:100px;top:1082px;width:50px;height:20px;background:#f0f0f0"></div>
<div class="ml " style="left:102.0px;top:1083.0px;line-height:20px;font-size:16px"><i style="width:45.00px;color:#000"><b style="transform:scaleX(0.7800)">Motion</b></i></div>
<div style="position:absolute;left:58px;top:1107px;width:11px;height:11px;background:linear-gradient(#fff,#d8d8d8);border:1px solid #9a9a9a"></div>
<div style="position:absolute;left:61px;top:1112px;width:5px;height:1px;background:#3b4f9b"></div>
<div style="position:absolute;left:63px;top:1110px;width:1px;height:5px;background:#3b4f9b"></div>
<div class="ml " style="left:102.0px;top:1103.0px;line-height:20px;font-size:16px"><i style="width:60.00px;color:#fff"><b style="transform:scaleX(0.7800)">Cylinder</b></i></div>
<div style="position:absolute;left:58px;top:1127px;width:11px;height:11px;background:linear-gradient(#fff,#d8d8d8);border:1px solid #9a9a9a"></div>
<div style="position:absolute;left:61px;top:1132px;width:5px;height:1px;background:#3b4f9b"></div>
<div style="position:absolute;left:63px;top:1130px;width:1px;height:5px;background:#3b4f9b"></div>
<div class="ml " style="left:102.0px;top:1123.0px;line-height:20px;font-size:16px"><i style="width:45.00px;color:#fff"><b style="transform:scaleX(0.7800)">Vaccum</b></i></div>
<div class="ml " style="left:79.0px;top:1143.0px;line-height:20px;font-size:16px"><i class="cj" style="width:75.00px;color:#fff;font-size:15px">初始化模块</i></div>
<div class="ml " style="left:79.0px;top:1163.0px;line-height:20px;font-size:16px"><i class="cj" style="width:60.00px;color:#fff;font-size:15px">后备模块</i></div>
<div class="ml " style="left:79.0px;top:1183.0px;line-height:20px;font-size:16px"><i class="cj" style="width:90.00px;color:#fff;font-size:15px">固定周期模块</i></div>
<div class="ml " style="left:79.0px;top:1203.0px;line-height:20px;font-size:16px"><i class="cj" style="width:105.00px;color:#fff;font-size:15px">单元间同步模块</i></div>
<div style="position:absolute;left:10px;top:1227px;width:11px;height:11px;background:linear-gradient(#fff,#d8d8d8);border:1px solid #9a9a9a"></div>
<div style="position:absolute;left:13px;top:1232px;width:5px;height:1px;background:#3b4f9b"></div>
<div class="ml " style="left:55.0px;top:1223.0px;line-height:20px;font-size:16px"><i class="cj" style="width:45.00px;color:#fff;font-size:15px">功能块</i></div>
<div style="position:absolute;left:34px;top:1247px;width:11px;height:11px;background:linear-gradient(#fff,#d8d8d8);border:1px solid #9a9a9a"></div>
<div style="position:absolute;left:37px;top:1252px;width:5px;height:1px;background:#3b4f9b"></div>
<div style="position:absolute;left:39px;top:1250px;width:1px;height:5px;background:#3b4f9b"></div>
<div class="ml " style="left:79.0px;top:1243.0px;line-height:20px;font-size:16px"><i style="width:82.50px;color:#fff"><b style="transform:scaleX(0.7800)">ActAirOper:</b></i><i class="cj" style="width:60.00px;color:#fff;font-size:15px">真空控制</i></div>
<div style="position:absolute;left:34px;top:1267px;width:11px;height:11px;background:linear-gradient(#fff,#d8d8d8);border:1px solid #9a9a9a"></div>
<div style="position:absolute;left:37px;top:1272px;width:5px;height:1px;background:#3b4f9b"></div>
<div style="position:absolute;left:39px;top:1270px;width:1px;height:5px;background:#3b4f9b"></div>
<div class="ml " style="left:79.0px;top:1263.0px;line-height:20px;font-size:16px"><i style="width:82.50px;color:#fff"><b style="transform:scaleX(0.7800)">ActCylOper:</b></i><i class="cj" style="width:60.00px;color:#fff;font-size:15px">气缸控制</i></div>
<div style="position:absolute;left:34px;top:1287px;width:11px;height:11px;background:linear-gradient(#fff,#d8d8d8);border:1px solid #9a9a9a"></div>
<div style="position:absolute;left:37px;top:1292px;width:5px;height:1px;background:#3b4f9b"></div>
<div style="position:absolute;left:39px;top:1290px;width:1px;height:5px;background:#3b4f9b"></div>
<div class="ml " style="left:79.0px;top:1283.0px;line-height:20px;font-size:16px"><i style="width:90.00px;color:#fff"><b style="transform:scaleX(0.7800)">CRC16_MODBUS</b></i></div>
<div style="position:absolute;left:34px;top:1307px;width:11px;height:11px;background:linear-gradient(#fff,#d8d8d8);border:1px solid #9a9a9a"></div>
<div style="position:absolute;left:37px;top:1312px;width:5px;height:1px;background:#3b4f9b"></div>
<div style="position:absolute;left:39px;top:1310px;width:1px;height:5px;background:#3b4f9b"></div>
<div class="ml " style="left:79.0px;top:1303.0px;line-height:20px;font-size:16px"><i style="width:82.50px;color:#fff"><b style="transform:scaleX(0.7800)">ClearSysErr</b></i></div>
<div style="position:absolute;left:34px;top:1327px;width:11px;height:11px;background:linear-gradient(#fff,#d8d8d8);border:1px solid #9a9a9a"></div>
<div style="position:absolute;left:37px;top:1332px;width:5px;height:1px;background:#3b4f9b"></div>
<div class="ml " style="left:79.0px;top:1323.0px;line-height:20px;font-size:16px"><i style="width:150.00px;color:#fff"><b style="transform:scaleX(0.7800)">GET_AXIS_REF_V1_0_00</b></i></div>
<svg style="left:29px;top:3px" width="20" height="18" viewBox="0 0 20 18"><rect width="20" height="18" fill="#4a4a4a"/><rect x="1" y="2" width="7" height="4" fill="#7ee07e"/><rect x="10" y="0" width="1" height="18" fill="#333"/><rect x="14" y="0" width="1" height="18" fill="#333"/><rect x="12" y="2" width="2" height="1" fill="#3f3"/><rect x="16" y="2" width="2" height="1" fill="#3f3"/><rect x="5" y="8" width="1.5" height="1.5" fill="#f50"/><rect x="7" y="8" width="1.5" height="1.5" fill="#fc0"/></svg>
<svg style="left:61px;top:23px" width="7" height="18" viewBox="0 0 7 18"><rect width="7" height="18" fill="#666"/><rect x="1.5" y="2.5" width="4" height="1.5" fill="#3f3"/></svg>
<svg style="left:84px;top:43px" width="7" height="18" viewBox="0 0 7 18"><rect width="7" height="18" fill="#666"/><rect x="1.5" y="2.5" width="4" height="1.5" fill="#3f3"/></svg>
<svg style="left:105px;top:63px" width="15" height="19" viewBox="0 0 15 19"><path d="M0 8L10 0H15V10L5 18H0Z" fill="#666"/><path d="M0 8L10 0H15L5 8Z" fill="#8a8a8a"/></svg>
<svg style="left:105px;top:83px" width="15" height="19" viewBox="0 0 15 19"><path d="M0 8L10 0H15V10L5 18H0Z" fill="#666"/><path d="M0 8L10 0H15L5 8Z" fill="#8a8a8a"/></svg>
<svg style="left:105px;top:103px" width="15" height="19" viewBox="0 0 15 19"><path d="M0 8L10 0H15V10L5 18H0Z" fill="#666"/><path d="M0 8L10 0H15L5 8Z" fill="#8a8a8a"/></svg>
<svg style="left:105px;top:123px" width="15" height="19" viewBox="0 0 15 19"><path d="M0 8L10 0H15V10L5 18H0Z" fill="#666"/><path d="M0 8L10 0H15L5 8Z" fill="#8a8a8a"/></svg>
<svg style="left:105px;top:143px" width="15" height="19" viewBox="0 0 15 19"><path d="M0 8L10 0H15V10L5 18H0Z" fill="#666"/><path d="M0 8L10 0H15L5 8Z" fill="#8a8a8a"/></svg>
<svg style="left:105px;top:163px" width="15" height="19" viewBox="0 0 15 19"><path d="M0 8L10 0H15V10L5 18H0Z" fill="#666"/><path d="M0 8L10 0H15L5 8Z" fill="#8a8a8a"/></svg>
<svg style="left:105px;top:183px" width="15" height="19" viewBox="0 0 15 19"><path d="M0 8L10 0H15V10L5 18H0Z" fill="#666"/><path d="M0 8L10 0H15L5 8Z" fill="#8a8a8a"/></svg>
<svg style="left:105px;top:203px" width="15" height="19" viewBox="0 0 15 19"><path d="M0 8L10 0H15V10L5 18H0Z" fill="#666"/><path d="M0 8L10 0H15L5 8Z" fill="#8a8a8a"/></svg>
<svg style="left:105px;top:223px" width="15" height="19" viewBox="0 0 15 19"><path d="M0 8L10 0H15V10L5 18H0Z" fill="#666"/><path d="M0 8L10 0H15L5 8Z" fill="#8a8a8a"/></svg>
<svg style="left:105px;top:243px" width="15" height="19" viewBox="0 0 15 19"><path d="M0 8L10 0H15V10L5 18H0Z" fill="#666"/><path d="M0 8L10 0H15L5 8Z" fill="#8a8a8a"/></svg>
<svg style="left:61px;top:263px" width="7" height="18" viewBox="0 0 7 18"><rect width="7" height="18" fill="#666"/><rect x="1.5" y="2.5" width="4" height="1.5" fill="#3f3"/></svg>
<svg style="left:76px;top:282px" width="21" height="20" viewBox="0 0 21 20"><rect x="0" y="0" width="6" height="15" fill="#333"/><rect x="1" y="1" width="4" height="2" fill="#c00"/><rect x="6" y="11" width="10" height="1" fill="#ccc"/><rect x="6" y="14" width="6" height="4" fill="#4ea8e8"/><rect x="13" y="14" width="7" height="4" fill="#4ea8e8"/></svg>
<svg style="left:76px;top:302px" width="22" height="20" viewBox="0 0 22 20"><rect x="0" y="1" width="10" height="18" fill="#333"/><rect x="1" y="2" width="8" height="2" fill="#c00"/><polygon points="20.96,10.22 20.96,11.78 18.51,12.67 18.08,13.72 19.18,16.08 18.08,17.18 15.72,16.08 14.67,16.51 13.78,18.96 12.22,18.96 11.33,16.51 10.28,16.08 7.92,17.18 6.82,16.08 7.92,13.72 7.49,12.67 5.04,11.78 5.04,10.22 7.49,9.33 7.92,8.28 6.82,5.92 7.92,4.82 10.28,5.92 11.33,5.49 12.22,3.04 13.78,3.04 14.67,5.49 15.72,5.92 18.08,4.82 19.18,5.92 18.08,8.28 18.51,9.33" fill="#f0b429"/><circle cx="13" cy="11" r="2.88" fill="#33476a"/></svg>
<svg style="left:76px;top:322px" width="22" height="20" viewBox="0 0 22 20"><rect x="0" y="1" width="14" height="5" fill="#555"/><rect x="0" y="1" width="4" height="8" fill="#555"/><polygon points="20.96,11.22 20.96,12.78 18.51,13.67 18.08,14.72 19.18,17.08 18.08,18.18 15.72,17.08 14.67,17.51 13.78,19.96 12.22,19.96 11.33,17.51 10.28,17.08 7.92,18.18 6.82,17.08 7.92,14.72 7.49,13.67 5.04,12.78 5.04,11.22 7.49,10.33 7.92,9.28 6.82,6.92 7.92,5.82 10.28,6.92 11.33,6.49 12.22,4.04 13.78,4.04 14.67,6.49 15.72,6.92 18.08,5.82 19.18,6.92 18.08,9.28 18.51,10.33" fill="#f0b429"/><circle cx="13" cy="12" r="2.88" fill="#33476a"/></svg>
<svg style="left:79px;top:342px" width="16" height="20" viewBox="0 0 16 20"><rect x="0" y="0" width="2.5" height="19" fill="#b87a1a"/><path d="M2.5 1L15 7L2.5 13Z" fill="#3aa83a"/></svg>
<svg style="left:76px;top:362px" width="20" height="20" viewBox="0 0 20 20"><polygon points="13.47,6.36 13.47,7.64 11.48,8.36 11.13,9.21 12.02,11.12 11.12,12.02 9.21,11.13 8.36,11.48 7.64,13.47 6.36,13.47 5.64,11.48 4.79,11.13 2.88,12.02 1.98,11.12 2.87,9.21 2.52,8.36 0.53,7.64 0.53,6.36 2.52,5.64 2.87,4.79 1.98,2.88 2.88,1.98 4.79,2.87 5.64,2.52 6.36,0.53 7.64,0.53 8.36,2.52 9.21,2.87 11.12,1.98 12.02,2.88 11.13,4.79 11.48,5.64" fill="#2ea043"/><circle cx="7" cy="7" r="2.34" fill="#33476a"/><polygon points="18.97,12.41 18.97,13.59 17.13,14.25 16.81,15.04 17.64,16.81 16.81,17.64 15.04,16.81 14.25,17.13 13.59,18.97 12.41,18.97 11.75,17.13 10.96,16.81 9.19,17.64 8.36,16.81 9.19,15.04 8.87,14.25 7.03,13.59 7.03,12.41 8.87,11.75 9.19,10.96 8.36,9.19 9.19,8.36 10.96,9.19 11.75,8.87 12.41,7.03 13.59,7.03 14.25,8.87 15.04,9.19 16.81,8.36 17.64,9.19 16.81,10.96 17.13,11.75" fill="#777"/><circle cx="13" cy="13" r="2.16" fill="#33476a"/></svg>
<svg style="left:76px;top:382px" width="22" height="20" viewBox="0 0 22 20"><polygon points="20.46,9.17 20.46,10.83 17.61,11.77 17.20,12.89 18.78,15.45 17.72,16.72 14.92,15.60 13.89,16.20 13.46,19.18 11.83,19.46 10.40,16.81 9.23,16.61 6.99,18.61 5.55,17.78 6.16,14.84 5.40,13.92 2.39,14.01 1.82,12.46 4.19,10.60 4.19,9.40 1.82,7.54 2.39,5.99 5.40,6.08 6.16,5.16 5.55,2.22 6.99,1.39 9.23,3.39 10.40,3.19 11.83,0.54 13.46,0.82 13.89,3.80 14.92,4.40 17.72,3.28 18.78,4.55 17.20,7.11 17.61,8.23" fill="#7a7a7a"/><circle cx="11" cy="10" r="3.42" fill="#33476a"/></svg>
<svg style="left:61px;top:403px" width="7" height="18" viewBox="0 0 7 18"><rect width="7" height="18" fill="#666"/><rect x="1.5" y="2.5" width="4" height="1.5" fill="#3f3"/></svg>
<svg style="left:53px;top:422px" width="20" height="20" viewBox="0 0 20 20"><rect x="0" y="6" width="10" height="13" fill="#444"/><rect x="2" y="5" width="4" height="3" fill="#7ee07e"/><path d="M4 5Q10 -1 18 4" stroke="#f08a1a" stroke-width="2" fill="none"/><path d="M2 3L7 1L6 7Z" fill="#f08a1a"/><path d="M6 18Q13 20 18 13" stroke="#3b8de0" stroke-width="2" fill="none"/></svg>
<svg style="left:29px;top:443px" width="20" height="18" viewBox="0 0 20 18"><rect width="20" height="18" fill="#eee" stroke="#999"/><rect x="2" y="4" width="7" height="1.2" fill="#333"/><rect x="11" y="4" width="7" height="1.2" fill="#333"/><rect x="8" y="2" width="1.2" height="5" fill="#333"/><rect x="11" y="2" width="1.2" height="5" fill="#333"/><rect x="3" y="12" width="14" height="3" fill="#3cb34a"/></svg>
<svg style="left:29px;top:463px" width="20" height="18" viewBox="0 0 20 18"><rect width="20" height="18" fill="#eee" stroke="#999"/><rect x="3" y="3" width="14" height="3" fill="#3b82e8"/><rect x="2" y="12" width="7" height="1.2" fill="#333"/><rect x="11" y="12" width="7" height="1.2" fill="#333"/><rect x="8" y="10" width="1.2" height="5" fill="#333"/><rect x="11" y="10" width="1.2" height="5" fill="#333"/></svg>
<svg style="left:29px;top:482px" width="20" height="20" viewBox="0 0 20 20"><rect x="8" y="0" width="11" height="14" fill="#ddd" stroke="#888"/><rect x="4" y="3" width="11" height="14" fill="#eee" stroke="#888"/><rect x="0.5" y="6" width="11" height="13.5" fill="#fff" stroke="#888"/><rect x="3" y="10" width="6" height="1" fill="#3b82e8"/><rect x="3" y="13" width="6" height="1" fill="#3b82e8"/><rect x="3" y="16" width="6" height="1" fill="#3b82e8"/></svg>
<svg style="left:29px;top:502px" width="20" height="20" viewBox="0 0 20 20"><rect x="8" y="0" width="11" height="14" fill="#ddd" stroke="#888"/><rect x="4" y="3" width="11" height="14" fill="#eee" stroke="#888"/><rect x="0.5" y="6" width="12" height="13.5" fill="#fff" stroke="#888"/><rect x="2" y="9" width="9" height="8" fill="#6aaee8"/><path d="M4 10L9 13L4 16Z" fill="#fff"/></svg>
<svg style="left:30px;top:523px" width="18" height="18" viewBox="0 0 18 18"><rect width="18" height="18" fill="#3c3c3c"/><rect x="2" y="2" width="7" height="4" fill="#7ee07e"/><rect x="11" y="0" width="1" height="18" fill="#222"/><rect x="14" y="0" width="1" height="18" fill="#222"/><rect x="4" y="9" width="1.5" height="1.5" fill="#f50"/><rect x="7" y="9" width="1.5" height="1.5" fill="#fc0"/></svg>
<svg style="left:29px;top:542px" width="20" height="20" viewBox="0 0 20 20"><rect x="8" y="0" width="11" height="13" fill="#ddd" stroke="#888"/><rect x="4" y="3" width="11" height="13" fill="#eee" stroke="#888"/><rect x="0" y="12" width="10" height="7" fill="#8fd18f"/><rect x="11" y="10" width="8" height="9" rx="1" fill="#f0b429"/><path d="M12.5 10V8Q15 5 17.5 8V10" stroke="#f0b429" stroke-width="1.5" fill="none"/><rect x="14.5" y="13" width="1.5" height="3" fill="#7a5400"/></svg>
<svg style="left:54px;top:564px" width="18" height="16" viewBox="0 0 18 16"><path d="M0 1H7L9 3H18V16H0Z" fill="#f8c850"/><rect x="0" y="4" width="18" height="12" fill="#fcd77c"/></svg>
<svg style="left:79px;top:583px" width="17" height="19" viewBox="0 0 17 19"><path d="M0.5 0.5H11L16.5 6V18.5H0.5Z" fill="#f4f4f4" stroke="#8a8a8a"/><path d="M11 0.5V6H16.5" fill="#ddd" stroke="#8a8a8a"/><path d="M2 8H6M8 8H15M2 13H6M8 13H15" stroke="#666" stroke-width="1.2"/><path d="M6 6V10M8 6V10M6 11V15M8 11V15" stroke="#666" stroke-width="1.2"/><circle cx="11" cy="8" r="1.6" fill="none" stroke="#666"/><circle cx="11" cy="13" r="1.6" fill="none" stroke="#666"/></svg>
<svg style="left:79px;top:603px" width="17" height="19" viewBox="0 0 17 19"><path d="M0.5 0.5H11L16.5 6V18.5H0.5Z" fill="#f4f4f4" stroke="#8a8a8a"/><path d="M11 0.5V6H16.5" fill="#ddd" stroke="#8a8a8a"/><path d="M2 8H6M8 8H15M2 13H6M8 13H15" stroke="#666" stroke-width="1.2"/><path d="M6 6V10M8 6V10M6 11V15M8 11V15" stroke="#666" stroke-width="1.2"/><circle cx="11" cy="8" r="1.6" fill="none" stroke="#666"/><circle cx="11" cy="13" r="1.6" fill="none" stroke="#666"/></svg>
<svg style="left:79px;top:623px" width="17" height="19" viewBox="0 0 17 19"><path d="M0.5 0.5H11L16.5 6V18.5H0.5Z" fill="#f4f4f4" stroke="#8a8a8a"/><path d="M11 0.5V6H16.5" fill="#ddd" stroke="#8a8a8a"/><path d="M2 8H6M8 8H15M2 13H6M8 13H15" stroke="#666" stroke-width="1.2"/><path d="M6 6V10M8 6V10M6 11V15M8 11V15" stroke="#666" stroke-width="1.2"/><circle cx="11" cy="8" r="1.6" fill="none" stroke="#666"/><circle cx="11" cy="13" r="1.6" fill="none" stroke="#666"/></svg>
<svg style="left:79px;top:643px" width="17" height="19" viewBox="0 0 17 19"><path d="M0.5 0.5H11L16.5 6V18.5H0.5Z" fill="#f4f4f4" stroke="#8a8a8a"/><path d="M11 0.5V6H16.5" fill="#ddd" stroke="#8a8a8a"/><path d="M2 8H6M8 8H15M2 13H6M8 13H15" stroke="#666" stroke-width="1.2"/><path d="M6 6V10M8 6V10M6 11V15M8 11V15" stroke="#666" stroke-width="1.2"/><circle cx="11" cy="8" r="1.6" fill="none" stroke="#666"/><circle cx="11" cy="13" r="1.6" fill="none" stroke="#666"/></svg>
<svg style="left:79px;top:663px" width="17" height="19" viewBox="0 0 17 19"><path d="M0.5 0.5H11L16.5 6V18.5H0.5Z" fill="#f4f4f4" stroke="#8a8a8a"/><path d="M11 0.5V6H16.5" fill="#ddd" stroke="#8a8a8a"/><path d="M2 8H6M8 8H15M2 13H6M8 13H15" stroke="#666" stroke-width="1.2"/><path d="M6 6V10M8 6V10M6 11V15M8 11V15" stroke="#666" stroke-width="1.2"/><circle cx="11" cy="8" r="1.6" fill="none" stroke="#666"/><circle cx="11" cy="13" r="1.6" fill="none" stroke="#666"/></svg>
<svg style="left:79px;top:683px" width="17" height="19" viewBox="0 0 17 19"><path d="M0.5 0.5H11L16.5 6V18.5H0.5Z" fill="#f4f4f4" stroke="#8a8a8a"/><path d="M11 0.5V6H16.5" fill="#ddd" stroke="#8a8a8a"/><path d="M2 8H6M8 8H15M2 13H6M8 13H15" stroke="#666" stroke-width="1.2"/><path d="M6 6V10M8 6V10M6 11V15M8 11V15" stroke="#666" stroke-width="1.2"/><circle cx="11" cy="8" r="1.6" fill="none" stroke="#666"/><circle cx="11" cy="13" r="1.6" fill="none" stroke="#666"/></svg>
<svg style="left:79px;top:703px" width="17" height="19" viewBox="0 0 17 19"><path d="M0.5 0.5H11L16.5 6V18.5H0.5Z" fill="#f4f4f4" stroke="#8a8a8a"/><path d="M11 0.5V6H16.5" fill="#ddd" stroke="#8a8a8a"/><path d="M2 8H6M8 8H15M2 13H6M8 13H15" stroke="#666" stroke-width="1.2"/><path d="M6 6V10M8 6V10M6 11V15M8 11V15" stroke="#666" stroke-width="1.2"/><circle cx="11" cy="8" r="1.6" fill="none" stroke="#666"/><circle cx="11" cy="13" r="1.6" fill="none" stroke="#666"/></svg>
<svg style="left:79px;top:723px" width="17" height="19" viewBox="0 0 17 19"><path d="M0.5 0.5H11L16.5 6V18.5H0.5Z" fill="#f4f4f4" stroke="#8a8a8a"/><path d="M11 0.5V6H16.5" fill="#ddd" stroke="#8a8a8a"/><path d="M2 8H6M8 8H15M2 13H6M8 13H15" stroke="#666" stroke-width="1.2"/><path d="M6 6V10M8 6V10M6 11V15M8 11V15" stroke="#666" stroke-width="1.2"/><circle cx="11" cy="8" r="1.6" fill="none" stroke="#666"/><circle cx="11" cy="13" r="1.6" fill="none" stroke="#666"/></svg>
<svg style="left:79px;top:743px" width="17" height="19" viewBox="0 0 17 19"><path d="M0.5 0.5H11L16.5 6V18.5H0.5Z" fill="#f4f4f4" stroke="#8a8a8a"/><path d="M11 0.5V6H16.5" fill="#ddd" stroke="#8a8a8a"/><path d="M2 8H6M8 8H15M2 13H6M8 13H15" stroke="#666" stroke-width="1.2"/><path d="M6 6V10M8 6V10M6 11V15M8 11V15" stroke="#666" stroke-width="1.2"/><circle cx="11" cy="8" r="1.6" fill="none" stroke="#666"/><circle cx="11" cy="13" r="1.6" fill="none" stroke="#666"/></svg>
<svg style="left:79px;top:763px" width="17" height="19" viewBox="0 0 17 19"><path d="M0.5 0.5H11L16.5 6V18.5H0.5Z" fill="#f4f4f4" stroke="#8a8a8a"/><path d="M11 0.5V6H16.5" fill="#ddd" stroke="#8a8a8a"/><path d="M2 8H6M8 8H15M2 13H6M8 13H15" stroke="#666" stroke-width="1.2"/><path d="M6 6V10M8 6V10M6 11V15M8 11V15" stroke="#666" stroke-width="1.2"/><circle cx="11" cy="8" r="1.6" fill="none" stroke="#666"/><circle cx="11" cy="13" r="1.6" fill="none" stroke="#666"/></svg>
<svg style="left:79px;top:783px" width="17" height="19" viewBox="0 0 17 19"><path d="M0.5 0.5H11L16.5 6V18.5H0.5Z" fill="#f4f4f4" stroke="#8a8a8a"/><path d="M11 0.5V6H16.5" fill="#ddd" stroke="#8a8a8a"/><path d="M2 8H6M8 8H15M2 13H6M8 13H15" stroke="#666" stroke-width="1.2"/><path d="M6 6V10M8 6V10M6 11V15M8 11V15" stroke="#666" stroke-width="1.2"/><circle cx="11" cy="8" r="1.6" fill="none" stroke="#666"/><circle cx="11" cy="13" r="1.6" fill="none" stroke="#666"/></svg>
<svg style="left:79px;top:803px" width="17" height="19" viewBox="0 0 17 19"><path d="M0.5 0.5H11L16.5 6V18.5H0.5Z" fill="#f4f4f4" stroke="#8a8a8a"/><path d="M11 0.5V6H16.5" fill="#ddd" stroke="#8a8a8a"/><path d="M2 8H6M8 8H15M2 13H6M8 13H15" stroke="#666" stroke-width="1.2"/><path d="M6 6V10M8 6V10M6 11V15M8 11V15" stroke="#666" stroke-width="1.2"/><circle cx="11" cy="8" r="1.6" fill="none" stroke="#666"/><circle cx="11" cy="13" r="1.6" fill="none" stroke="#666"/></svg>
<svg style="left:79px;top:823px" width="17" height="19" viewBox="0 0 17 19"><path d="M0.5 0.5H11L16.5 6V18.5H0.5Z" fill="#f4f4f4" stroke="#8a8a8a"/><path d="M11 0.5V6H16.5" fill="#ddd" stroke="#8a8a8a"/><path d="M2 8H6M8 8H15M2 13H6M8 13H15" stroke="#666" stroke-width="1.2"/><path d="M6 6V10M8 6V10M6 11V15M8 11V15" stroke="#666" stroke-width="1.2"/><circle cx="11" cy="8" r="1.6" fill="none" stroke="#666"/><circle cx="11" cy="13" r="1.6" fill="none" stroke="#666"/></svg>
<svg style="left:79px;top:843px" width="17" height="19" viewBox="0 0 17 19"><path d="M0.5 0.5H11L16.5 6V18.5H0.5Z" fill="#f4f4f4" stroke="#8a8a8a"/><path d="M11 0.5V6H16.5" fill="#ddd" stroke="#8a8a8a"/><path d="M2 8H6M8 8H15M2 13H6M8 13H15" stroke="#666" stroke-width="1.2"/><path d="M6 6V10M8 6V10M6 11V15M8 11V15" stroke="#666" stroke-width="1.2"/><circle cx="11" cy="8" r="1.6" fill="none" stroke="#666"/><circle cx="11" cy="13" r="1.6" fill="none" stroke="#666"/></svg>
<svg style="left:79px;top:863px" width="17" height="19" viewBox="0 0 17 19"><path d="M0.5 0.5H11L16.5 6V18.5H0.5Z" fill="#f4f4f4" stroke="#8a8a8a"/><path d="M11 0.5V6H16.5" fill="#ddd" stroke="#8a8a8a"/><path d="M2 8H6M8 8H15M2 13H6M8 13H15" stroke="#666" stroke-width="1.2"/><path d="M6 6V10M8 6V10M6 11V15M8 11V15" stroke="#666" stroke-width="1.2"/><circle cx="11" cy="8" r="1.6" fill="none" stroke="#666"/><circle cx="11" cy="13" r="1.6" fill="none" stroke="#666"/></svg>
<svg style="left:79px;top:883px" width="17" height="19" viewBox="0 0 17 19"><path d="M0.5 0.5H11L16.5 6V18.5H0.5Z" fill="#f4f4f4" stroke="#8a8a8a"/><path d="M11 0.5V6H16.5" fill="#ddd" stroke="#8a8a8a"/><path d="M2 8H6M8 8H15M2 13H6M8 13H15" stroke="#666" stroke-width="1.2"/><path d="M6 6V10M8 6V10M6 11V15M8 11V15" stroke="#666" stroke-width="1.2"/><circle cx="11" cy="8" r="1.6" fill="none" stroke="#666"/><circle cx="11" cy="13" r="1.6" fill="none" stroke="#666"/></svg>
<svg style="left:79px;top:903px" width="17" height="19" viewBox="0 0 17 19"><path d="M0.5 0.5H11L16.5 6V18.5H0.5Z" fill="#f4f4f4" stroke="#8a8a8a"/><path d="M11 0.5V6H16.5" fill="#ddd" stroke="#8a8a8a"/><path d="M2 8H6M8 8H15M2 13H6M8 13H15" stroke="#666" stroke-width="1.2"/><path d="M6 6V10M8 6V10M6 11V15M8 11V15" stroke="#666" stroke-width="1.2"/><circle cx="11" cy="8" r="1.6" fill="none" stroke="#666"/><circle cx="11" cy="13" r="1.6" fill="none" stroke="#666"/></svg>
<svg style="left:79px;top:923px" width="17" height="19" viewBox="0 0 17 19"><path d="M0.5 0.5H11L16.5 6V18.5H0.5Z" fill="#f4f4f4" stroke="#8a8a8a"/><path d="M11 0.5V6H16.5" fill="#ddd" stroke="#8a8a8a"/><path d="M2 8H6M8 8H15M2 13H6M8 13H15" stroke="#666" stroke-width="1.2"/><path d="M6 6V10M8 6V10M6 11V15M8 11V15" stroke="#666" stroke-width="1.2"/><circle cx="11" cy="8" r="1.6" fill="none" stroke="#666"/><circle cx="11" cy="13" r="1.6" fill="none" stroke="#666"/></svg>
<svg style="left:79px;top:943px" width="17" height="19" viewBox="0 0 17 19"><path d="M0.5 0.5H11L16.5 6V18.5H0.5Z" fill="#f4f4f4" stroke="#8a8a8a"/><path d="M11 0.5V6H16.5" fill="#ddd" stroke="#8a8a8a"/><path d="M2 8H6M8 8H15M2 13H6M8 13H15" stroke="#666" stroke-width="1.2"/><path d="M6 6V10M8 6V10M6 11V15M8 11V15" stroke="#666" stroke-width="1.2"/><circle cx="11" cy="8" r="1.6" fill="none" stroke="#666"/><circle cx="11" cy="13" r="1.6" fill="none" stroke="#666"/></svg>
<svg style="left:79px;top:963px" width="17" height="19" viewBox="0 0 17 19"><path d="M0.5 0.5H11L16.5 6V18.5H0.5Z" fill="#f4f4f4" stroke="#8a8a8a"/><path d="M11 0.5V6H16.5" fill="#ddd" stroke="#8a8a8a"/><path d="M2 8H6M8 8H15M2 13H6M8 13H15" stroke="#666" stroke-width="1.2"/><path d="M6 6V10M8 6V10M6 11V15M8 11V15" stroke="#666" stroke-width="1.2"/><circle cx="11" cy="8" r="1.6" fill="none" stroke="#666"/><circle cx="11" cy="13" r="1.6" fill="none" stroke="#666"/></svg>
<svg style="left:79px;top:983px" width="17" height="19" viewBox="0 0 17 19"><path d="M0.5 0.5H11L16.5 6V18.5H0.5Z" fill="#f4f4f4" stroke="#8a8a8a"/><path d="M11 0.5V6H16.5" fill="#ddd" stroke="#8a8a8a"/><path d="M2 8H6M8 8H15M2 13H6M8 13H15" stroke="#666" stroke-width="1.2"/><path d="M6 6V10M8 6V10M6 11V15M8 11V15" stroke="#666" stroke-width="1.2"/><circle cx="11" cy="8" r="1.6" fill="none" stroke="#666"/><circle cx="11" cy="13" r="1.6" fill="none" stroke="#666"/></svg>
<svg style="left:79px;top:1003px" width="17" height="19" viewBox="0 0 17 19"><path d="M0.5 0.5H11L16.5 6V18.5H0.5Z" fill="#f4f4f4" stroke="#8a8a8a"/><path d="M11 0.5V6H16.5" fill="#ddd" stroke="#8a8a8a"/><path d="M2 8H6M8 8H15M2 13H6M8 13H15" stroke="#666" stroke-width="1.2"/><path d="M6 6V10M8 6V10M6 11V15M8 11V15" stroke="#666" stroke-width="1.2"/><circle cx="11" cy="8" r="1.6" fill="none" stroke="#666"/><circle cx="11" cy="13" r="1.6" fill="none" stroke="#666"/></svg>
<svg style="left:79px;top:1023px" width="17" height="19" viewBox="0 0 17 19"><path d="M0.5 0.5H11L16.5 6V18.5H0.5Z" fill="#f4f4f4" stroke="#8a8a8a"/><path d="M11 0.5V6H16.5" fill="#ddd" stroke="#8a8a8a"/><path d="M2 8H6M8 8H15M2 13H6M8 13H15" stroke="#666" stroke-width="1.2"/><path d="M6 6V10M8 6V10M6 11V15M8 11V15" stroke="#666" stroke-width="1.2"/><circle cx="11" cy="8" r="1.6" fill="none" stroke="#666"/><circle cx="11" cy="13" r="1.6" fill="none" stroke="#666"/></svg>
<svg style="left:79px;top:1043px" width="17" height="19" viewBox="0 0 17 19"><path d="M0.5 0.5H11L16.5 6V18.5H0.5Z" fill="#f4f4f4" stroke="#8a8a8a"/><path d="M11 0.5V6H16.5" fill="#ddd" stroke="#8a8a8a"/><path d="M2 8H6M8 8H15M2 13H6M8 13H15" stroke="#666" stroke-width="1.2"/><path d="M6 6V10M8 6V10M6 11V15M8 11V15" stroke="#666" stroke-width="1.2"/><circle cx="11" cy="8" r="1.6" fill="none" stroke="#666"/><circle cx="11" cy="13" r="1.6" fill="none" stroke="#666"/></svg>
<svg style="left:79px;top:1063px" width="17" height="19" viewBox="0 0 17 19"><path d="M0.5 0.5H11L16.5 6V18.5H0.5Z" fill="#f4f4f4" stroke="#8a8a8a"/><path d="M11 0.5V6H16.5" fill="#ddd" stroke="#8a8a8a"/><path d="M2 8H6M8 8H15M2 13H6M8 13H15" stroke="#666" stroke-width="1.2"/><path d="M6 6V10M8 6V10M6 11V15M8 11V15" stroke="#666" stroke-width="1.2"/><circle cx="11" cy="8" r="1.6" fill="none" stroke="#666"/><circle cx="11" cy="13" r="1.6" fill="none" stroke="#666"/></svg>
<svg style="left:79px;top:1083px" width="17" height="19" viewBox="0 0 17 19"><path d="M0.5 0.5H11L16.5 6V18.5H0.5Z" fill="#f4f4f4" stroke="#8a8a8a"/><path d="M11 0.5V6H16.5" fill="#ddd" stroke="#8a8a8a"/><path d="M2 8H6M8 8H15M2 13H6M8 13H15" stroke="#666" stroke-width="1.2"/><path d="M6 6V10M8 6V10M6 11V15M8 11V15" stroke="#666" stroke-width="1.2"/><circle cx="11" cy="8" r="1.6" fill="none" stroke="#666"/><circle cx="11" cy="13" r="1.6" fill="none" stroke="#666"/></svg>
<svg style="left:79px;top:1103px" width="17" height="19" viewBox="0 0 17 19"><path d="M0.5 0.5H11L16.5 6V18.5H0.5Z" fill="#f4f4f4" stroke="#8a8a8a"/><path d="M11 0.5V6H16.5" fill="#ddd" stroke="#8a8a8a"/><path d="M2 8H6M8 8H15M2 13H6M8 13H15" stroke="#666" stroke-width="1.2"/><path d="M6 6V10M8 6V10M6 11V15M8 11V15" stroke="#666" stroke-width="1.2"/><circle cx="11" cy="8" r="1.6" fill="none" stroke="#666"/><circle cx="11" cy="13" r="1.6" fill="none" stroke="#666"/></svg>
<svg style="left:79px;top:1123px" width="17" height="19" viewBox="0 0 17 19"><path d="M0.5 0.5H11L16.5 6V18.5H0.5Z" fill="#f4f4f4" stroke="#8a8a8a"/><path d="M11 0.5V6H16.5" fill="#ddd" stroke="#8a8a8a"/><path d="M2 8H6M8 8H15M2 13H6M8 13H15" stroke="#666" stroke-width="1.2"/><path d="M6 6V10M8 6V10M6 11V15M8 11V15" stroke="#666" stroke-width="1.2"/><circle cx="11" cy="8" r="1.6" fill="none" stroke="#666"/><circle cx="11" cy="13" r="1.6" fill="none" stroke="#666"/></svg>
<svg style="left:54px;top:1144px" width="18" height="16" viewBox="0 0 18 16"><path d="M0 1H7L9 3H18V16H0Z" fill="#f8c850"/><rect x="0" y="4" width="18" height="12" fill="#fcd77c"/></svg>
<svg style="left:54px;top:1164px" width="18" height="16" viewBox="0 0 18 16"><path d="M0 1H7L9 3H18V16H0Z" fill="#f8c850"/><rect x="0" y="4" width="18" height="12" fill="#fcd77c"/></svg>
<svg style="left:54px;top:1184px" width="18" height="16" viewBox="0 0 18 16"><path d="M0 1H7L9 3H18V16H0Z" fill="#f8c850"/><rect x="0" y="4" width="18" height="12" fill="#fcd77c"/></svg>
<svg style="left:54px;top:1204px" width="18" height="16" viewBox="0 0 18 16"><path d="M0 1H7L9 3H18V16H0Z" fill="#f8c850"/><rect x="0" y="4" width="18" height="12" fill="#fcd77c"/></svg>
<svg style="left:29px;top:1222px" width="20" height="20" viewBox="0 0 20 20"><rect x="6" y="1" width="13" height="12" fill="#ddd" stroke="#888"/><rect x="2" y="2" width="14" height="6" rx="2" fill="#9ab8e6"/><rect x="1" y="7" width="14" height="12" fill="#fff" stroke="#888"/><path d="M2 13H14" stroke="#333" stroke-width="1"/><path d="M5 11V15M7 11V15" stroke="#333"/><circle cx="10.5" cy="13" r="1.5" fill="none" stroke="#333"/></svg>
<svg style="left:55px;top:1243px" width="15" height="19" viewBox="0 0 15 19"><rect x="0" y="1" width="13" height="6" rx="1" fill="#9ab8e6"/><rect x="0.5" y="7" width="14" height="11" fill="#fff" stroke="#666"/><path d="M1 12.5H14" stroke="#333"/><path d="M4 10V15M6 10V15" stroke="#333"/><circle cx="10" cy="12.5" r="1.6" fill="none" stroke="#333"/></svg>
<svg style="left:55px;top:1263px" width="15" height="19" viewBox="0 0 15 19"><rect x="0" y="1" width="13" height="6" rx="1" fill="#9ab8e6"/><rect x="0.5" y="7" width="14" height="11" fill="#fff" stroke="#666"/><path d="M1 12.5H14" stroke="#333"/><path d="M4 10V15M6 10V15" stroke="#333"/><circle cx="10" cy="12.5" r="1.6" fill="none" stroke="#333"/></svg>
<svg style="left:55px;top:1283px" width="15" height="19" viewBox="0 0 15 19"><rect x="0" y="1" width="13" height="6" rx="1" fill="#9ab8e6"/><rect x="0.5" y="7" width="14" height="11" fill="#fff" stroke="#666"/><path d="M1 12.5H14" stroke="#333"/><path d="M4 10V15M6 10V15" stroke="#333"/><circle cx="10" cy="12.5" r="1.6" fill="none" stroke="#333"/></svg>
<svg style="left:55px;top:1303px" width="15" height="19" viewBox="0 0 15 19"><rect x="0" y="1" width="13" height="6" rx="1" fill="#9ab8e6"/><rect x="0.5" y="7" width="14" height="11" fill="#fff" stroke="#666"/><path d="M1 12.5H14" stroke="#333"/><path d="M4 10V15M6 10V15" stroke="#333"/><circle cx="10" cy="12.5" r="1.6" fill="none" stroke="#333"/></svg>
<svg style="left:55px;top:1323px" width="15" height="19" viewBox="0 0 15 19"><rect x="0" y="1" width="13" height="6" rx="1" fill="#9ab8e6"/><rect x="0.5" y="7" width="14" height="11" fill="#fff" stroke="#666"/><path d="M1 12.5H14" stroke="#333"/><path d="M4 10V15M6 10V15" stroke="#333"/><circle cx="10" cy="12.5" r="1.6" fill="none" stroke="#333"/></svg>
</div>
<!--ICONS--></body></html>
